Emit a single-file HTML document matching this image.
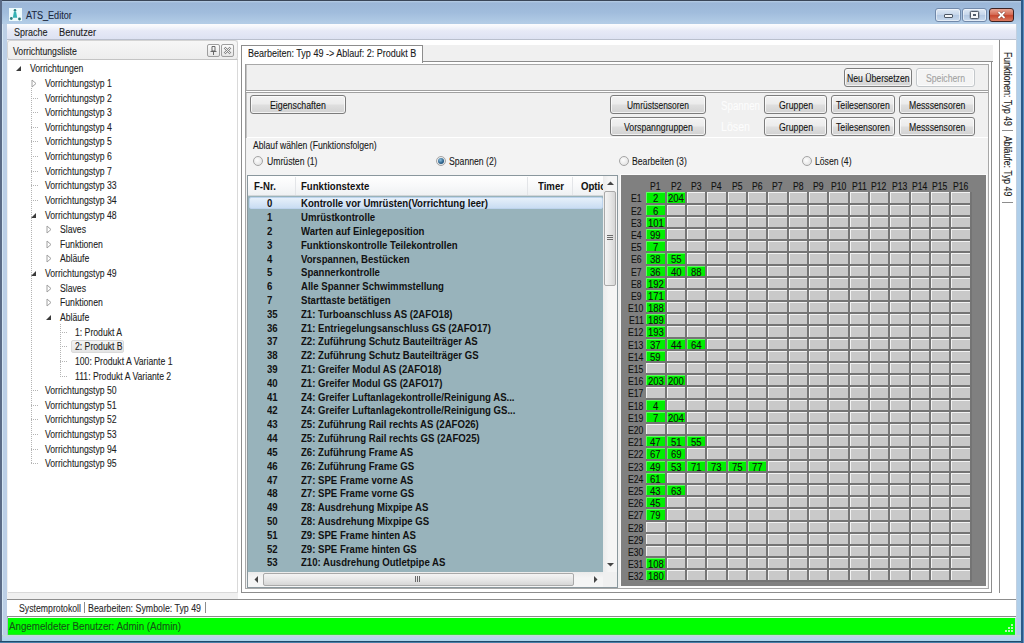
<!DOCTYPE html>
<html><head><meta charset="utf-8"><title>ATS_Editor</title><style>
*{margin:0;padding:0;box-sizing:border-box}
html,body{width:1024px;height:643px;overflow:hidden}
body{position:relative;font-family:"Liberation Sans",sans-serif;font-size:10px;color:#000;background:#bcd1ea}
.a{position:absolute}
.t{position:absolute;white-space:nowrap;line-height:1;-webkit-text-stroke:0.1px currentColor}
.btn{border-radius:3px;box-shadow:inset 0 0 0 1px rgba(255,255,255,.7)}
</style></head><body>

<div class="a" style="left:0px;top:0px;width:1024px;height:643px;background:#c3d3ec;"></div>
<div class="a" style="left:0px;top:0px;width:1024px;height:24px;background:linear-gradient(#c6daec 0px,#9cb7d8 3px,#a0bcdc 12px,#b2cce6 23px);"></div>
<div class="a" style="left:0px;top:0px;width:1024px;height:1px;background:#3a4658;"></div>
<div class="a" style="left:0px;top:0px;width:2px;height:643px;background:#5b6b86;"></div>
<div class="a" style="left:2px;top:24px;width:1px;height:611px;background:#d4e6f4;"></div>
<div class="a" style="left:3px;top:24px;width:4px;height:611px;background:#bccfe6;"></div>
<div class="a" style="left:7px;top:40px;width:1px;height:595px;background:#aab6c9;"></div>
<div class="a" style="left:1016px;top:24px;width:1px;height:611px;background:#c2d0e0;"></div>
<div class="a" style="left:1017px;top:24px;width:4px;height:611px;background:#b0cfea;"></div>
<div class="a" style="left:1021px;top:0px;width:2px;height:643px;background:#2b5b88;"></div>
<div class="a" style="left:1023px;top:0px;width:1px;height:643px;background:#5a8fc0;"></div>
<div class="a" style="left:2px;top:635px;width:1019px;height:6px;background:linear-gradient(#b8e8c8 0px,#c0d0e8 1.5px,#b8d4ec 3px,#a8d4ec 6px);"></div>
<div class="a" style="left:0px;top:641px;width:1021px;height:1px;background:#1f4b6b;"></div>
<div class="a" style="left:0px;top:642px;width:1021px;height:1px;background:#4a80a8;"></div>
<svg class="a" style="left:9px;top:8px" width="13" height="13" viewBox="0 0 13 13">
<rect width="13" height="13" fill="#eefbfc"/>
<circle cx="6" cy="2.2" r="1.3" fill="#2a7f80"/>
<path d="M5 3.5 L7 3.5 L8.2 9.8 L3.8 9.8 Z" fill="#33b2b4"/>
<circle cx="2.3" cy="10.5" r="1.4" fill="#2b7e7f"/>
<circle cx="10.5" cy="11" r="1.4" fill="#2a6f70"/>
</svg>
<div class="t" style="left:25.50px;top:11px;font-size:10px;color:#1a2840;transform:scaleX(0.9089);transform-origin:0 0;">ATS_Editor</div>
<div class="a" style="left:935px;top:8px;width:26px;height:14px;border:1px solid #7189aa;border-radius:3px;background:linear-gradient(#dfe9f5,#c4d5ea 50%,#b3c8e2 51%,#c9daee);box-shadow:inset 0 0 0 1px rgba(255,255,255,.5)"></div>
<div class="a" style="left:944px;top:14px;width:9px;height:4px;border:1px solid #4d5866;background:#f4f6f9;border-radius:1px"></div>
<div class="a" style="left:962px;top:8px;width:25px;height:14px;border:1px solid #7189aa;border-radius:3px;background:linear-gradient(#dfe9f5,#c4d5ea 50%,#b3c8e2 51%,#c9daee);box-shadow:inset 0 0 0 1px rgba(255,255,255,.5)"></div>
<div class="a" style="left:970px;top:11px;width:9px;height:8px;border:1px solid #505b6a;background:#f4f6f9;border-radius:1.5px;box-shadow:0 0 0 0.5px rgba(80,90,105,.5)"></div><div class="a" style="left:973px;top:14px;width:3px;height:2px;background:#505b6a"></div>
<div class="a" style="left:989px;top:8px;width:25px;height:14px;border:1px solid #3c2222;border-radius:3px;background:linear-gradient(#e8a593,#d66e58 45%,#c7472f 55%,#db7a60);"></div>
<svg class="a" style="left:996px;top:10px" width="11" height="10" viewBox="0 0 11 10"><path d="M2.5 2 L8.5 8 M8.5 2 L2.5 8" stroke="#7a3a30" stroke-width="3"/><path d="M2.5 2 L8.5 8 M8.5 2 L2.5 8" stroke="#fff" stroke-width="1.8"/></svg>

<div class="a" style="left:7px;top:24px;width:1009px;height:16px;background:linear-gradient(#fbfcfe 0px,#f4f6fb 3px,#e6e9f6 7px,#dde2f2 15px);border-bottom:1px solid #b9bfcd;"></div>
<div class="t" style="left:13.50px;top:28px;font-size:10px;color:#1e1e1e;transform:scaleX(0.8993);transform-origin:0 0;">Sprache</div>
<div class="t" style="left:58.70px;top:28px;font-size:10px;color:#1e1e1e;transform:scaleX(0.9245);transform-origin:0 0;">Benutzer</div>
<div class="a" style="left:7px;top:40px;width:1009px;height:560px;background:#f0f0f0;"></div>
<div class="a" style="left:7px;top:40px;width:231px;height:20px;background:linear-gradient(#f6f6f6,#ededed);border:1px solid #d4d4d4;border-radius:3px;"></div>
<div class="t" style="left:12.50px;top:47px;font-size:10px;color:#1e1e1e;transform:scaleX(0.8689);transform-origin:0 0;">Vorrichtungsliste</div>
<div class="a" style="left:207px;top:44px;width:13px;height:13px;border:1px solid #9e9e9e;border-radius:2px;background:linear-gradient(#fbfbfb,#e6e6e6)"></div>
<svg class="a" style="left:207px;top:44px" width="13" height="13" viewBox="0 0 13 13"><path d="M5 2.5h3v4.5h-3z M3.5 7.5h6 M6.5 7.5v3.5" stroke="#5a5a5a" fill="none" stroke-width="0.9"/></svg>
<div class="a" style="left:221px;top:44px;width:13px;height:13px;border:1px solid #9e9e9e;border-radius:2px;background:linear-gradient(#fbfbfb,#e6e6e6)"></div>
<svg class="a" style="left:221px;top:44px" width="13" height="13" viewBox="0 0 13 13"><path d="M3.5 3.5l6 6 M9.5 3.5l-6 6" stroke="#858585" stroke-width="2.4" fill="none"/><path d="M3.5 3.5l6 6 M9.5 3.5l-6 6" stroke="#f2f2f2" stroke-width="1" fill="none"/></svg>

<div class="a" style="left:8px;top:59px;width:230px;height:534px;background:#fff;border:1px solid #d9d9d9;border-top:1px solid #c4c4c4;border-left:none;"></div>
<div class="a" style="left:71px;top:340px;width:53px;height:13px;background:linear-gradient(#f4f4f4,#e4e4e4);border:1px solid #dadada;border-radius:2px"></div>
<div class="t" style="left:30.30px;top:64px;font-size:10px;color:#1e1e1e;transform:scaleX(0.8650);transform-origin:0 0;">Vorrichtungen</div>
<svg class="a" style="left:14.8px;top:65px" width="7" height="7" viewBox="0 0 7 7"><path d="M6 1 L6 6 L1 6 Z" fill="#3a3a3a"/></svg>
<div class="t" style="left:44.60px;top:79px;font-size:10px;color:#1e1e1e;transform:scaleX(0.8650);transform-origin:0 0;">Vorrichtungstyp 1</div>
<svg class="a" style="left:30.5px;top:79px" width="6" height="9" viewBox="0 0 6 9"><path d="M1 1 L5 4.5 L1 8 Z" fill="#fff" stroke="#a0a0a0" stroke-width="1"/></svg>
<div class="t" style="left:44.60px;top:94px;font-size:10px;color:#1e1e1e;transform:scaleX(0.8650);transform-origin:0 0;">Vorrichtungstyp 2</div>
<div class="t" style="left:44.60px;top:108px;font-size:10px;color:#1e1e1e;transform:scaleX(0.8650);transform-origin:0 0;">Vorrichtungstyp 3</div>
<div class="t" style="left:44.60px;top:123px;font-size:10px;color:#1e1e1e;transform:scaleX(0.8650);transform-origin:0 0;">Vorrichtungstyp 4</div>
<div class="t" style="left:44.60px;top:137px;font-size:10px;color:#1e1e1e;transform:scaleX(0.8650);transform-origin:0 0;">Vorrichtungstyp 5</div>
<div class="t" style="left:44.60px;top:152px;font-size:10px;color:#1e1e1e;transform:scaleX(0.8650);transform-origin:0 0;">Vorrichtungstyp 6</div>
<div class="t" style="left:44.60px;top:167px;font-size:10px;color:#1e1e1e;transform:scaleX(0.8650);transform-origin:0 0;">Vorrichtungstyp 7</div>
<div class="t" style="left:44.60px;top:181px;font-size:10px;color:#1e1e1e;transform:scaleX(0.8650);transform-origin:0 0;">Vorrichtungstyp 33</div>
<div class="t" style="left:44.60px;top:196px;font-size:10px;color:#1e1e1e;transform:scaleX(0.8650);transform-origin:0 0;">Vorrichtungstyp 34</div>
<div class="t" style="left:44.60px;top:211px;font-size:10px;color:#1e1e1e;transform:scaleX(0.8650);transform-origin:0 0;">Vorrichtungstyp 48</div>
<svg class="a" style="left:29.5px;top:212px" width="7" height="7" viewBox="0 0 7 7"><path d="M6 1 L6 6 L1 6 Z" fill="#3a3a3a"/></svg>
<div class="t" style="left:59.80px;top:225px;font-size:10px;color:#1e1e1e;transform:scaleX(0.8650);transform-origin:0 0;">Slaves</div>
<svg class="a" style="left:45.7px;top:225px" width="6" height="9" viewBox="0 0 6 9"><path d="M1 1 L5 4.5 L1 8 Z" fill="#fff" stroke="#a0a0a0" stroke-width="1"/></svg>
<div class="t" style="left:59.80px;top:240px;font-size:10px;color:#1e1e1e;transform:scaleX(0.8650);transform-origin:0 0;">Funktionen</div>
<svg class="a" style="left:45.7px;top:240px" width="6" height="9" viewBox="0 0 6 9"><path d="M1 1 L5 4.5 L1 8 Z" fill="#fff" stroke="#a0a0a0" stroke-width="1"/></svg>
<div class="t" style="left:59.80px;top:254px;font-size:10px;color:#1e1e1e;transform:scaleX(0.8650);transform-origin:0 0;">Abläufe</div>
<svg class="a" style="left:45.7px;top:254px" width="6" height="9" viewBox="0 0 6 9"><path d="M1 1 L5 4.5 L1 8 Z" fill="#fff" stroke="#a0a0a0" stroke-width="1"/></svg>
<div class="t" style="left:44.60px;top:269px;font-size:10px;color:#1e1e1e;transform:scaleX(0.8650);transform-origin:0 0;">Vorrichtungstyp 49</div>
<svg class="a" style="left:29.5px;top:270px" width="7" height="7" viewBox="0 0 7 7"><path d="M6 1 L6 6 L1 6 Z" fill="#3a3a3a"/></svg>
<div class="t" style="left:59.80px;top:284px;font-size:10px;color:#1e1e1e;transform:scaleX(0.8650);transform-origin:0 0;">Slaves</div>
<svg class="a" style="left:45.7px;top:284px" width="6" height="9" viewBox="0 0 6 9"><path d="M1 1 L5 4.5 L1 8 Z" fill="#fff" stroke="#a0a0a0" stroke-width="1"/></svg>
<div class="t" style="left:59.80px;top:298px;font-size:10px;color:#1e1e1e;transform:scaleX(0.8650);transform-origin:0 0;">Funktionen</div>
<svg class="a" style="left:45.7px;top:298px" width="6" height="9" viewBox="0 0 6 9"><path d="M1 1 L5 4.5 L1 8 Z" fill="#fff" stroke="#a0a0a0" stroke-width="1"/></svg>
<div class="t" style="left:59.80px;top:313px;font-size:10px;color:#1e1e1e;transform:scaleX(0.8650);transform-origin:0 0;">Abläufe</div>
<svg class="a" style="left:44.7px;top:314px" width="7" height="7" viewBox="0 0 7 7"><path d="M6 1 L6 6 L1 6 Z" fill="#3a3a3a"/></svg>
<div class="t" style="left:74.90px;top:328px;font-size:10px;color:#1e1e1e;transform:scaleX(0.8650);transform-origin:0 0;">1: Produkt A</div>
<div class="t" style="left:74.90px;top:342px;font-size:10px;color:#1e1e1e;transform:scaleX(0.8650);transform-origin:0 0;">2: Produkt B</div>
<div class="t" style="left:74.90px;top:357px;font-size:10px;color:#1e1e1e;transform:scaleX(0.8650);transform-origin:0 0;">100: Produkt A Variante 1</div>
<div class="t" style="left:74.90px;top:372px;font-size:10px;color:#1e1e1e;transform:scaleX(0.8650);transform-origin:0 0;">111: Produkt A Variante 2</div>
<div class="t" style="left:44.60px;top:386px;font-size:10px;color:#1e1e1e;transform:scaleX(0.8650);transform-origin:0 0;">Vorrichtungstyp 50</div>
<div class="t" style="left:44.60px;top:401px;font-size:10px;color:#1e1e1e;transform:scaleX(0.8650);transform-origin:0 0;">Vorrichtungstyp 51</div>
<div class="t" style="left:44.60px;top:415px;font-size:10px;color:#1e1e1e;transform:scaleX(0.8650);transform-origin:0 0;">Vorrichtungstyp 52</div>
<div class="t" style="left:44.60px;top:430px;font-size:10px;color:#1e1e1e;transform:scaleX(0.8650);transform-origin:0 0;">Vorrichtungstyp 53</div>
<div class="t" style="left:44.60px;top:445px;font-size:10px;color:#1e1e1e;transform:scaleX(0.8650);transform-origin:0 0;">Vorrichtungstyp 94</div>
<div class="t" style="left:44.60px;top:459px;font-size:10px;color:#1e1e1e;transform:scaleX(0.8650);transform-origin:0 0;">Vorrichtungstyp 95</div>
<div class="a" style="left:31px;top:98px;width:8px;height:1px;background:repeating-linear-gradient(90deg,#b4b4b4 0 1px,transparent 1px 2px)"></div>
<div class="a" style="left:31px;top:112px;width:8px;height:1px;background:repeating-linear-gradient(90deg,#b4b4b4 0 1px,transparent 1px 2px)"></div>
<div class="a" style="left:31px;top:127px;width:8px;height:1px;background:repeating-linear-gradient(90deg,#b4b4b4 0 1px,transparent 1px 2px)"></div>
<div class="a" style="left:31px;top:141px;width:8px;height:1px;background:repeating-linear-gradient(90deg,#b4b4b4 0 1px,transparent 1px 2px)"></div>
<div class="a" style="left:31px;top:156px;width:8px;height:1px;background:repeating-linear-gradient(90deg,#b4b4b4 0 1px,transparent 1px 2px)"></div>
<div class="a" style="left:31px;top:171px;width:8px;height:1px;background:repeating-linear-gradient(90deg,#b4b4b4 0 1px,transparent 1px 2px)"></div>
<div class="a" style="left:31px;top:185px;width:8px;height:1px;background:repeating-linear-gradient(90deg,#b4b4b4 0 1px,transparent 1px 2px)"></div>
<div class="a" style="left:31px;top:200px;width:8px;height:1px;background:repeating-linear-gradient(90deg,#b4b4b4 0 1px,transparent 1px 2px)"></div>
<div class="a" style="left:60px;top:332px;width:8px;height:1px;background:repeating-linear-gradient(90deg,#b4b4b4 0 1px,transparent 1px 2px)"></div>
<div class="a" style="left:60px;top:346px;width:8px;height:1px;background:repeating-linear-gradient(90deg,#b4b4b4 0 1px,transparent 1px 2px)"></div>
<div class="a" style="left:60px;top:361px;width:8px;height:1px;background:repeating-linear-gradient(90deg,#b4b4b4 0 1px,transparent 1px 2px)"></div>
<div class="a" style="left:60px;top:376px;width:8px;height:1px;background:repeating-linear-gradient(90deg,#b4b4b4 0 1px,transparent 1px 2px)"></div>
<div class="a" style="left:31px;top:390px;width:8px;height:1px;background:repeating-linear-gradient(90deg,#b4b4b4 0 1px,transparent 1px 2px)"></div>
<div class="a" style="left:31px;top:405px;width:8px;height:1px;background:repeating-linear-gradient(90deg,#b4b4b4 0 1px,transparent 1px 2px)"></div>
<div class="a" style="left:31px;top:419px;width:8px;height:1px;background:repeating-linear-gradient(90deg,#b4b4b4 0 1px,transparent 1px 2px)"></div>
<div class="a" style="left:31px;top:434px;width:8px;height:1px;background:repeating-linear-gradient(90deg,#b4b4b4 0 1px,transparent 1px 2px)"></div>
<div class="a" style="left:31px;top:449px;width:8px;height:1px;background:repeating-linear-gradient(90deg,#b4b4b4 0 1px,transparent 1px 2px)"></div>
<div class="a" style="left:31px;top:463px;width:8px;height:1px;background:repeating-linear-gradient(90deg,#b4b4b4 0 1px,transparent 1px 2px)"></div>
<div class="a" style="left:31px;top:88px;width:1px;height:376px;background:repeating-linear-gradient(#b4b4b4 0 1px,transparent 1px 2px)"></div>
<div class="a" style="left:60px;top:324px;width:1px;height:53px;background:repeating-linear-gradient(#b4b4b4 0 1px,transparent 1px 2px)"></div>
<div class="a" style="left:238px;top:40px;width:761px;height:560px;background:#fff;"></div>
<div class="a" style="left:242px;top:45px;width:751px;height:17px;background:#f0f0f0;border-bottom:1px solid #8d8d8d;"></div>
<div class="a" style="left:241px;top:45px;width:182px;height:18px;background:#fff;border:1px solid #8d8d8d;border-bottom:none;"></div>
<div class="t" style="left:247.80px;top:49px;font-size:10px;color:#1a1a1a;transform:scaleX(0.9000);transform-origin:0 0;">Bearbeiten: Typ 49 -&gt; Ablauf: 2: Produkt B</div>
<div class="a" style="left:241px;top:62px;width:751px;height:531px;border:1px solid #8d8d8d;border-top:none;"></div>
<div class="a" style="left:245px;top:64px;width:744px;height:525px;background:#f0f0f0;border:1px solid #a8a8a8;"></div>
<div class="a" style="left:245px;top:64px;width:1px;height:74px;background:#9a9a9a;"></div>
<div class="a" style="left:246px;top:65px;width:1px;height:73px;background:#c4c4c4;"></div>
<div class="a" style="left:246px;top:90px;width:742px;height:1px;background:#a0a0a0;"></div>
<div class="a" style="left:246px;top:91px;width:742px;height:1px;background:#fff;"></div>
<div class="a" style="left:246px;top:92px;width:742px;height:1px;background:#a0a0a0;"></div>
<div class="a btn" style="left:844px;top:68px;width:68px;height:19px;background:linear-gradient(#f3f3f3 0%,#ececec 45%,#dedede 55%,#d2d2d2 100%);border:1px solid #7c7c7c;"></div>
<div class="t" style="left:846.75px;top:74px;font-size:10px;color:#151515;transform:scaleX(0.8649);transform-origin:0 0;">Neu Übersetzen</div>
<div class="a btn" style="left:916px;top:68px;width:59px;height:19px;background:#f4f4f4;border:1px solid #c4c8cb;"></div>
<div class="t" style="left:926.00px;top:74px;font-size:10px;color:#a3a3a3;transform:scaleX(0.8661);transform-origin:0 0;">Speichern</div>
<div class="a btn" style="left:250px;top:95px;width:96px;height:19px;background:linear-gradient(#f3f3f3 0%,#ececec 45%,#dedede 55%,#d2d2d2 100%);border:1px solid #7c7c7c;"></div>
<div class="t" style="left:270.10px;top:101px;font-size:10px;color:#151515;transform:scaleX(0.8804);transform-origin:0 0;">Eigenschaften</div>
<div class="a btn" style="left:610px;top:95px;width:96px;height:19px;background:linear-gradient(#f3f3f3 0%,#ececec 45%,#dedede 55%,#d2d2d2 100%);border:1px solid #7c7c7c;"></div>
<div class="t" style="left:627.00px;top:101px;font-size:10px;color:#151515;transform:scaleX(0.8451);transform-origin:0 0;">Umrüstsensoren</div>
<div class="a btn" style="left:610px;top:117px;width:96px;height:19px;background:linear-gradient(#f3f3f3 0%,#ececec 45%,#dedede 55%,#d2d2d2 100%);border:1px solid #7c7c7c;"></div>
<div class="t" style="left:623.62px;top:123px;font-size:10px;color:#151515;transform:scaleX(0.8707);transform-origin:0 0;">Vorspanngruppen</div>
<div class="t" style="left:720.50px;top:100px;font-size:12.5px;color:#fdfdfd;transform:scaleX(0.7792);transform-origin:0 0;">Spannen</div>
<div class="t" style="left:720.50px;top:121px;font-size:12.5px;color:#fdfdfd;transform:scaleX(0.8514);transform-origin:0 0;">Lösen</div>
<div class="a btn" style="left:764px;top:95px;width:63px;height:19px;background:linear-gradient(#f3f3f3 0%,#ececec 45%,#dedede 55%,#d2d2d2 100%);border:1px solid #7c7c7c;"></div>
<div class="t" style="left:778.50px;top:101px;font-size:10px;color:#151515;transform:scaleX(0.8736);transform-origin:0 0;">Gruppen</div>
<div class="a btn" style="left:764px;top:117px;width:63px;height:19px;background:linear-gradient(#f3f3f3 0%,#ececec 45%,#dedede 55%,#d2d2d2 100%);border:1px solid #7c7c7c;"></div>
<div class="t" style="left:778.50px;top:123px;font-size:10px;color:#151515;transform:scaleX(0.8736);transform-origin:0 0;">Gruppen</div>
<div class="a btn" style="left:831px;top:95px;width:64px;height:19px;background:linear-gradient(#f3f3f3 0%,#ececec 45%,#dedede 55%,#d2d2d2 100%);border:1px solid #7c7c7c;"></div>
<div class="t" style="left:836.12px;top:101px;font-size:10px;color:#151515;transform:scaleX(0.8712);transform-origin:0 0;">Teilesensoren</div>
<div class="a btn" style="left:831px;top:117px;width:64px;height:19px;background:linear-gradient(#f3f3f3 0%,#ececec 45%,#dedede 55%,#d2d2d2 100%);border:1px solid #7c7c7c;"></div>
<div class="t" style="left:836.12px;top:123px;font-size:10px;color:#151515;transform:scaleX(0.8712);transform-origin:0 0;">Teilesensoren</div>
<div class="a btn" style="left:899px;top:95px;width:76px;height:19px;background:linear-gradient(#f3f3f3 0%,#ececec 45%,#dedede 55%,#d2d2d2 100%);border:1px solid #7c7c7c;"></div>
<div class="t" style="left:908.88px;top:101px;font-size:10px;color:#151515;transform:scaleX(0.8650);transform-origin:0 0;">Messsensoren</div>
<div class="a btn" style="left:899px;top:117px;width:76px;height:19px;background:linear-gradient(#f3f3f3 0%,#ececec 45%,#dedede 55%,#d2d2d2 100%);border:1px solid #7c7c7c;"></div>
<div class="t" style="left:908.88px;top:123px;font-size:10px;color:#151515;transform:scaleX(0.8650);transform-origin:0 0;">Messsensoren</div>
<div class="a" style="left:247px;top:137px;width:741px;height:38px;background:#f3f3f3;border-top:1px solid #fff;"></div>
<div class="t" style="left:252.80px;top:141px;font-size:10px;color:#1a1a1a;transform:scaleX(0.8652);transform-origin:0 0;">Ablauf wählen (Funktionsfolgen)</div>
<div class="a" style="left:253px;top:156px;width:10px;height:10px;border-radius:50%;border:1px solid #a4a4a4;background:radial-gradient(circle at 40% 40%,#fdfdfd,#dcdcdc)"></div>
<div class="t" style="left:266.80px;top:157px;font-size:10px;color:#1a1a1a;transform:scaleX(0.8650);transform-origin:0 0;">Umrüsten (1)</div>
<div class="a" style="left:436px;top:156px;width:10px;height:10px;border-radius:50%;border:1px solid #a4a4a4;background:radial-gradient(circle at 40% 40%,#fdfdfd,#dcdcdc)"></div>
<div class="a" style="left:438px;top:158px;width:6px;height:6px;border-radius:50%;background:radial-gradient(circle at 40% 35%,#8cc0e0,#2a5f88 60%,#1d4a70)"></div>
<div class="t" style="left:449.00px;top:157px;font-size:10px;color:#1a1a1a;transform:scaleX(0.8650);transform-origin:0 0;">Spannen (2)</div>
<div class="a" style="left:619px;top:156px;width:10px;height:10px;border-radius:50%;border:1px solid #a4a4a4;background:radial-gradient(circle at 40% 40%,#fdfdfd,#dcdcdc)"></div>
<div class="t" style="left:632.00px;top:157px;font-size:10px;color:#1a1a1a;transform:scaleX(0.8650);transform-origin:0 0;">Bearbeiten (3)</div>
<div class="a" style="left:802px;top:156px;width:10px;height:10px;border-radius:50%;border:1px solid #a4a4a4;background:radial-gradient(circle at 40% 40%,#fdfdfd,#dcdcdc)"></div>
<div class="t" style="left:814.80px;top:157px;font-size:10px;color:#1a1a1a;transform:scaleX(0.8650);transform-origin:0 0;">Lösen (4)</div>
<div class="a" style="left:247px;top:175px;width:371px;height:413px;background:#98b3bb;border:1px solid #8a979d;"></div>
<div class="a" style="left:248px;top:176px;width:355px;height:20px;background:linear-gradient(#ffffff,#f8f9fa 50%,#eff1f3);border-bottom:1px solid #d3d6d9;"></div>
<div class="a" style="left:295px;top:177px;width:1px;height:18px;background:#e3e5e8;"></div>
<div class="a" style="left:527px;top:177px;width:1px;height:18px;background:#e3e5e8;"></div>
<div class="a" style="left:572px;top:177px;width:1px;height:18px;background:#e3e5e8;"></div>
<div class="t" style="left:254.20px;top:182px;font-size:10px;color:#111;transform:scaleX(0.9600);transform-origin:0 0;font-weight:bold;-webkit-text-stroke:0;">F-Nr.</div>
<div class="t" style="left:300.70px;top:182px;font-size:10px;color:#111;transform:scaleX(0.9600);transform-origin:0 0;font-weight:bold;-webkit-text-stroke:0;">Funktionstexte</div>
<div class="t" style="left:537.70px;top:182px;font-size:10px;color:#111;transform:scaleX(0.9600);transform-origin:0 0;font-weight:bold;-webkit-text-stroke:0;">Timer</div>
<div class="a" style="left:581px;top:176px;width:22px;height:19px;overflow:hidden"><div class="t" style="left:0;top:6px;font-size:10px;font-weight:bold;color:#111;transform:scaleX(0.96);transform-origin:0 0">Optionen</div></div>
<div class="a" style="left:249px;top:197px;width:354px;height:12px;background:linear-gradient(#e6f0fa,#c9ddf2);border:1px solid #bcd3ec;border-radius:2px"></div>
<div class="t" style="left:267.20px;top:199px;font-size:10px;color:#111;transform:scaleX(0.9600);transform-origin:0 0;font-weight:bold;-webkit-text-stroke:0;">0</div>
<div class="t" style="left:300.80px;top:199px;font-size:10px;color:#111;transform:scaleX(0.9600);transform-origin:0 0;font-weight:bold;-webkit-text-stroke:0;">Kontrolle vor Umrüsten(Vorrichtung leer)</div>
<div class="t" style="left:267.20px;top:213px;font-size:10px;color:#111;transform:scaleX(0.9600);transform-origin:0 0;font-weight:bold;-webkit-text-stroke:0;">1</div>
<div class="t" style="left:300.80px;top:213px;font-size:10px;color:#111;transform:scaleX(0.9600);transform-origin:0 0;font-weight:bold;-webkit-text-stroke:0;">Umrüstkontrolle</div>
<div class="t" style="left:267.20px;top:227px;font-size:10px;color:#111;transform:scaleX(0.9600);transform-origin:0 0;font-weight:bold;-webkit-text-stroke:0;">2</div>
<div class="t" style="left:300.80px;top:227px;font-size:10px;color:#111;transform:scaleX(0.9600);transform-origin:0 0;font-weight:bold;-webkit-text-stroke:0;">Warten auf Einlegeposition</div>
<div class="t" style="left:267.20px;top:241px;font-size:10px;color:#111;transform:scaleX(0.9600);transform-origin:0 0;font-weight:bold;-webkit-text-stroke:0;">3</div>
<div class="t" style="left:300.80px;top:241px;font-size:10px;color:#111;transform:scaleX(0.9600);transform-origin:0 0;font-weight:bold;-webkit-text-stroke:0;">Funktionskontrolle Teilekontrollen</div>
<div class="t" style="left:267.20px;top:255px;font-size:10px;color:#111;transform:scaleX(0.9600);transform-origin:0 0;font-weight:bold;-webkit-text-stroke:0;">4</div>
<div class="t" style="left:300.80px;top:255px;font-size:10px;color:#111;transform:scaleX(0.9600);transform-origin:0 0;font-weight:bold;-webkit-text-stroke:0;">Vorspannen, Bestücken</div>
<div class="t" style="left:267.20px;top:268px;font-size:10px;color:#111;transform:scaleX(0.9600);transform-origin:0 0;font-weight:bold;-webkit-text-stroke:0;">5</div>
<div class="t" style="left:300.80px;top:268px;font-size:10px;color:#111;transform:scaleX(0.9600);transform-origin:0 0;font-weight:bold;-webkit-text-stroke:0;">Spannerkontrolle</div>
<div class="t" style="left:267.20px;top:282px;font-size:10px;color:#111;transform:scaleX(0.9600);transform-origin:0 0;font-weight:bold;-webkit-text-stroke:0;">6</div>
<div class="t" style="left:300.80px;top:282px;font-size:10px;color:#111;transform:scaleX(0.9600);transform-origin:0 0;font-weight:bold;-webkit-text-stroke:0;">Alle Spanner Schwimmstellung</div>
<div class="t" style="left:267.20px;top:296px;font-size:10px;color:#111;transform:scaleX(0.9600);transform-origin:0 0;font-weight:bold;-webkit-text-stroke:0;">7</div>
<div class="t" style="left:300.80px;top:296px;font-size:10px;color:#111;transform:scaleX(0.9600);transform-origin:0 0;font-weight:bold;-webkit-text-stroke:0;">Starttaste betätigen</div>
<div class="t" style="left:267.20px;top:310px;font-size:10px;color:#111;transform:scaleX(0.9600);transform-origin:0 0;font-weight:bold;-webkit-text-stroke:0;">35</div>
<div class="t" style="left:300.80px;top:310px;font-size:10px;color:#111;transform:scaleX(0.9600);transform-origin:0 0;font-weight:bold;-webkit-text-stroke:0;">Z1: Turboanschluss AS (2AFO18)</div>
<div class="t" style="left:267.20px;top:324px;font-size:10px;color:#111;transform:scaleX(0.9600);transform-origin:0 0;font-weight:bold;-webkit-text-stroke:0;">36</div>
<div class="t" style="left:300.80px;top:324px;font-size:10px;color:#111;transform:scaleX(0.9600);transform-origin:0 0;font-weight:bold;-webkit-text-stroke:0;">Z1: Entriegelungsanschluss GS (2AFO17)</div>
<div class="t" style="left:267.20px;top:337px;font-size:10px;color:#111;transform:scaleX(0.9600);transform-origin:0 0;font-weight:bold;-webkit-text-stroke:0;">37</div>
<div class="t" style="left:300.80px;top:337px;font-size:10px;color:#111;transform:scaleX(0.9600);transform-origin:0 0;font-weight:bold;-webkit-text-stroke:0;">Z2: Zuführung Schutz Bauteilträger AS</div>
<div class="t" style="left:267.20px;top:351px;font-size:10px;color:#111;transform:scaleX(0.9600);transform-origin:0 0;font-weight:bold;-webkit-text-stroke:0;">38</div>
<div class="t" style="left:300.80px;top:351px;font-size:10px;color:#111;transform:scaleX(0.9600);transform-origin:0 0;font-weight:bold;-webkit-text-stroke:0;">Z2: Zuführung Schutz Bauteilträger GS</div>
<div class="t" style="left:267.20px;top:365px;font-size:10px;color:#111;transform:scaleX(0.9600);transform-origin:0 0;font-weight:bold;-webkit-text-stroke:0;">39</div>
<div class="t" style="left:300.80px;top:365px;font-size:10px;color:#111;transform:scaleX(0.9600);transform-origin:0 0;font-weight:bold;-webkit-text-stroke:0;">Z1: Greifer Modul AS (2AFO18)</div>
<div class="t" style="left:267.20px;top:379px;font-size:10px;color:#111;transform:scaleX(0.9600);transform-origin:0 0;font-weight:bold;-webkit-text-stroke:0;">40</div>
<div class="t" style="left:300.80px;top:379px;font-size:10px;color:#111;transform:scaleX(0.9600);transform-origin:0 0;font-weight:bold;-webkit-text-stroke:0;">Z1: Greifer Modul GS (2AFO17)</div>
<div class="t" style="left:267.20px;top:393px;font-size:10px;color:#111;transform:scaleX(0.9600);transform-origin:0 0;font-weight:bold;-webkit-text-stroke:0;">41</div>
<div class="t" style="left:300.80px;top:393px;font-size:10px;color:#111;transform:scaleX(0.9600);transform-origin:0 0;font-weight:bold;-webkit-text-stroke:0;">Z4: Greifer Luftanlagekontrolle/Reinigung AS...</div>
<div class="t" style="left:267.20px;top:406px;font-size:10px;color:#111;transform:scaleX(0.9600);transform-origin:0 0;font-weight:bold;-webkit-text-stroke:0;">42</div>
<div class="t" style="left:300.80px;top:406px;font-size:10px;color:#111;transform:scaleX(0.9600);transform-origin:0 0;font-weight:bold;-webkit-text-stroke:0;">Z4: Greifer Luftanlagekontrolle/Reinigung GS...</div>
<div class="t" style="left:267.20px;top:420px;font-size:10px;color:#111;transform:scaleX(0.9600);transform-origin:0 0;font-weight:bold;-webkit-text-stroke:0;">43</div>
<div class="t" style="left:300.80px;top:420px;font-size:10px;color:#111;transform:scaleX(0.9600);transform-origin:0 0;font-weight:bold;-webkit-text-stroke:0;">Z5: Zuführung Rail rechts AS (2AFO26)</div>
<div class="t" style="left:267.20px;top:434px;font-size:10px;color:#111;transform:scaleX(0.9600);transform-origin:0 0;font-weight:bold;-webkit-text-stroke:0;">44</div>
<div class="t" style="left:300.80px;top:434px;font-size:10px;color:#111;transform:scaleX(0.9600);transform-origin:0 0;font-weight:bold;-webkit-text-stroke:0;">Z5: Zuführung Rail rechts GS (2AFO25)</div>
<div class="t" style="left:267.20px;top:448px;font-size:10px;color:#111;transform:scaleX(0.9600);transform-origin:0 0;font-weight:bold;-webkit-text-stroke:0;">45</div>
<div class="t" style="left:300.80px;top:448px;font-size:10px;color:#111;transform:scaleX(0.9600);transform-origin:0 0;font-weight:bold;-webkit-text-stroke:0;">Z6: Zuführung Frame AS</div>
<div class="t" style="left:267.20px;top:462px;font-size:10px;color:#111;transform:scaleX(0.9600);transform-origin:0 0;font-weight:bold;-webkit-text-stroke:0;">46</div>
<div class="t" style="left:300.80px;top:462px;font-size:10px;color:#111;transform:scaleX(0.9600);transform-origin:0 0;font-weight:bold;-webkit-text-stroke:0;">Z6: Zuführung Frame GS</div>
<div class="t" style="left:267.20px;top:476px;font-size:10px;color:#111;transform:scaleX(0.9600);transform-origin:0 0;font-weight:bold;-webkit-text-stroke:0;">47</div>
<div class="t" style="left:300.80px;top:476px;font-size:10px;color:#111;transform:scaleX(0.9600);transform-origin:0 0;font-weight:bold;-webkit-text-stroke:0;">Z7: SPE Frame vorne AS</div>
<div class="t" style="left:267.20px;top:489px;font-size:10px;color:#111;transform:scaleX(0.9600);transform-origin:0 0;font-weight:bold;-webkit-text-stroke:0;">48</div>
<div class="t" style="left:300.80px;top:489px;font-size:10px;color:#111;transform:scaleX(0.9600);transform-origin:0 0;font-weight:bold;-webkit-text-stroke:0;">Z7: SPE Frame vorne GS</div>
<div class="t" style="left:267.20px;top:503px;font-size:10px;color:#111;transform:scaleX(0.9600);transform-origin:0 0;font-weight:bold;-webkit-text-stroke:0;">49</div>
<div class="t" style="left:300.80px;top:503px;font-size:10px;color:#111;transform:scaleX(0.9600);transform-origin:0 0;font-weight:bold;-webkit-text-stroke:0;">Z8: Ausdrehung Mixpipe AS</div>
<div class="t" style="left:267.20px;top:517px;font-size:10px;color:#111;transform:scaleX(0.9600);transform-origin:0 0;font-weight:bold;-webkit-text-stroke:0;">50</div>
<div class="t" style="left:300.80px;top:517px;font-size:10px;color:#111;transform:scaleX(0.9600);transform-origin:0 0;font-weight:bold;-webkit-text-stroke:0;">Z8: Ausdrehung Mixpipe GS</div>
<div class="t" style="left:267.20px;top:531px;font-size:10px;color:#111;transform:scaleX(0.9600);transform-origin:0 0;font-weight:bold;-webkit-text-stroke:0;">51</div>
<div class="t" style="left:300.80px;top:531px;font-size:10px;color:#111;transform:scaleX(0.9600);transform-origin:0 0;font-weight:bold;-webkit-text-stroke:0;">Z9: SPE Frame hinten AS</div>
<div class="t" style="left:267.20px;top:545px;font-size:10px;color:#111;transform:scaleX(0.9600);transform-origin:0 0;font-weight:bold;-webkit-text-stroke:0;">52</div>
<div class="t" style="left:300.80px;top:545px;font-size:10px;color:#111;transform:scaleX(0.9600);transform-origin:0 0;font-weight:bold;-webkit-text-stroke:0;">Z9: SPE Frame hinten GS</div>
<div class="t" style="left:267.20px;top:558px;font-size:10px;color:#111;transform:scaleX(0.9600);transform-origin:0 0;font-weight:bold;-webkit-text-stroke:0;">53</div>
<div class="t" style="left:300.80px;top:558px;font-size:10px;color:#111;transform:scaleX(0.9600);transform-origin:0 0;font-weight:bold;-webkit-text-stroke:0;">Z10: Ausdrehung Outletpipe AS</div>
<div class="a" style="left:603px;top:176px;width:14px;height:396px;background:linear-gradient(90deg,#ebebeb,#f5f5f5 40%,#f5f5f5);"></div>
<svg class="a" style="left:607px;top:181px" width="7" height="4" viewBox="0 0 7 4"><path d="M0 4 L3.5 0.5 L7 4Z" fill="#454545"/></svg>
<div class="a" style="left:604px;top:191px;width:12px;height:95px;background:linear-gradient(90deg,#f4f4f4,#e6e6e6 55%,#d6d6d6);border:1px solid #a9a9a9;border-radius:2px;"></div>
<div class="a" style="left:607px;top:235px;width:6px;height:1px;background:#6a6a6a"></div><div class="a" style="left:607px;top:237px;width:6px;height:1px;background:#6a6a6a"></div><div class="a" style="left:607px;top:239px;width:6px;height:1px;background:#6a6a6a"></div>
<svg class="a" style="left:607px;top:563px" width="7" height="4" viewBox="0 0 7 4"><path d="M0 0 L3.5 3.5 L7 0Z" fill="#454545"/></svg>
<div class="a" style="left:248px;top:572px;width:355px;height:15px;background:linear-gradient(#ebebeb,#f5f5f5 40%,#f5f5f5);"></div>
<div class="a" style="left:603px;top:572px;width:14px;height:15px;background:#f0f0f0;"></div>
<svg class="a" style="left:254px;top:576px" width="4" height="7" viewBox="0 0 4 7"><path d="M4 0 L0.5 3.5 L4 7Z" fill="#454545"/></svg>
<div class="a" style="left:263px;top:573px;width:311px;height:13px;background:linear-gradient(#f4f4f4,#e6e6e6 55%,#d6d6d6);border:1px solid #a9a9a9;border-radius:2px;"></div>
<div class="a" style="left:415px;top:576px;width:1px;height:6px;background:#6a6a6a"></div><div class="a" style="left:417px;top:576px;width:1px;height:6px;background:#6a6a6a"></div><div class="a" style="left:419px;top:576px;width:1px;height:6px;background:#6a6a6a"></div>
<svg class="a" style="left:594px;top:576px" width="4" height="7" viewBox="0 0 4 7"><path d="M0 0 L3.5 3.5 L0 7Z" fill="#454545"/></svg>
<div class="a" style="left:620px;top:174px;width:367px;height:414px;background:#fbfbfb;"></div>
<div class="a" style="left:621px;top:175px;width:365px;height:411px;background:#808080;"></div>
<div class="a" style="left:646px;top:192px;width:326px;height:390px;background:#747474;"></div>
<div class="t" style="left:650.24px;top:182px;font-size:10px;color:#111;transform:scaleX(0.8600);transform-origin:0 0;">P1</div>
<div class="t" style="left:670.74px;top:182px;font-size:10px;color:#111;transform:scaleX(0.8600);transform-origin:0 0;">P2</div>
<div class="t" style="left:690.74px;top:182px;font-size:10px;color:#111;transform:scaleX(0.8600);transform-origin:0 0;">P3</div>
<div class="t" style="left:711.24px;top:182px;font-size:10px;color:#111;transform:scaleX(0.8600);transform-origin:0 0;">P4</div>
<div class="t" style="left:731.74px;top:182px;font-size:10px;color:#111;transform:scaleX(0.8600);transform-origin:0 0;">P5</div>
<div class="t" style="left:751.74px;top:182px;font-size:10px;color:#111;transform:scaleX(0.8600);transform-origin:0 0;">P6</div>
<div class="t" style="left:772.24px;top:182px;font-size:10px;color:#111;transform:scaleX(0.8600);transform-origin:0 0;">P7</div>
<div class="t" style="left:792.74px;top:182px;font-size:10px;color:#111;transform:scaleX(0.8600);transform-origin:0 0;">P8</div>
<div class="t" style="left:812.74px;top:182px;font-size:10px;color:#111;transform:scaleX(0.8600);transform-origin:0 0;">P9</div>
<div class="t" style="left:830.85px;top:182px;font-size:10px;color:#111;transform:scaleX(0.8600);transform-origin:0 0;">P10</div>
<div class="t" style="left:851.67px;top:182px;font-size:10px;color:#111;transform:scaleX(0.8600);transform-origin:0 0;">P11</div>
<div class="t" style="left:871.35px;top:182px;font-size:10px;color:#111;transform:scaleX(0.8600);transform-origin:0 0;">P12</div>
<div class="t" style="left:891.85px;top:182px;font-size:10px;color:#111;transform:scaleX(0.8600);transform-origin:0 0;">P13</div>
<div class="t" style="left:912.35px;top:182px;font-size:10px;color:#111;transform:scaleX(0.8600);transform-origin:0 0;">P14</div>
<div class="t" style="left:932.35px;top:182px;font-size:10px;color:#111;transform:scaleX(0.8600);transform-origin:0 0;">P15</div>
<div class="t" style="left:952.85px;top:182px;font-size:10px;color:#111;transform:scaleX(0.8600);transform-origin:0 0;">P16</div>
<div class="t" style="left:630.74px;top:194px;font-size:10px;color:#111;transform:scaleX(0.8600);transform-origin:0 0;">E1</div>
<div class="a" style="left:646px;top:192px;width:19px;height:11px;background:#00f000;border-top:1px solid #5cff5c;border-left:1px solid #5cff5c"></div>
<div class="t" style="left:652.86px;top:194px;font-size:10px;color:#111;transform:scaleX(0.9500);transform-origin:0 0;">2</div>
<div class="a" style="left:667px;top:192px;width:18px;height:11px;background:#00f000;border-top:1px solid #5cff5c;border-left:1px solid #5cff5c"></div>
<div class="t" style="left:668.08px;top:194px;font-size:10px;color:#111;transform:scaleX(0.9500);transform-origin:0 0;">204</div>
<div class="a" style="left:687px;top:192px;width:18px;height:11px;background:#c9c9c9;border-top:1px solid #f2f2f2;border-left:1px solid #f2f2f2"></div>
<div class="a" style="left:707px;top:192px;width:19px;height:11px;background:#c9c9c9;border-top:1px solid #f2f2f2;border-left:1px solid #f2f2f2"></div>
<div class="a" style="left:728px;top:192px;width:18px;height:11px;background:#c9c9c9;border-top:1px solid #f2f2f2;border-left:1px solid #f2f2f2"></div>
<div class="a" style="left:748px;top:192px;width:18px;height:11px;background:#c9c9c9;border-top:1px solid #f2f2f2;border-left:1px solid #f2f2f2"></div>
<div class="a" style="left:768px;top:192px;width:19px;height:11px;background:#c9c9c9;border-top:1px solid #f2f2f2;border-left:1px solid #f2f2f2"></div>
<div class="a" style="left:789px;top:192px;width:18px;height:11px;background:#c9c9c9;border-top:1px solid #f2f2f2;border-left:1px solid #f2f2f2"></div>
<div class="a" style="left:809px;top:192px;width:18px;height:11px;background:#c9c9c9;border-top:1px solid #f2f2f2;border-left:1px solid #f2f2f2"></div>
<div class="a" style="left:829px;top:192px;width:19px;height:11px;background:#c9c9c9;border-top:1px solid #f2f2f2;border-left:1px solid #f2f2f2"></div>
<div class="a" style="left:850px;top:192px;width:18px;height:11px;background:#c9c9c9;border-top:1px solid #f2f2f2;border-left:1px solid #f2f2f2"></div>
<div class="a" style="left:870px;top:192px;width:18px;height:11px;background:#c9c9c9;border-top:1px solid #f2f2f2;border-left:1px solid #f2f2f2"></div>
<div class="a" style="left:890px;top:192px;width:19px;height:11px;background:#c9c9c9;border-top:1px solid #f2f2f2;border-left:1px solid #f2f2f2"></div>
<div class="a" style="left:911px;top:192px;width:18px;height:11px;background:#c9c9c9;border-top:1px solid #f2f2f2;border-left:1px solid #f2f2f2"></div>
<div class="a" style="left:931px;top:192px;width:18px;height:11px;background:#c9c9c9;border-top:1px solid #f2f2f2;border-left:1px solid #f2f2f2"></div>
<div class="a" style="left:951px;top:192px;width:19px;height:11px;background:#c9c9c9;border-top:1px solid #f2f2f2;border-left:1px solid #f2f2f2"></div>
<div class="t" style="left:630.74px;top:207px;font-size:10px;color:#111;transform:scaleX(0.8600);transform-origin:0 0;">E2</div>
<div class="a" style="left:646px;top:205px;width:19px;height:10px;background:#00f000;border-top:1px solid #5cff5c;border-left:1px solid #5cff5c"></div>
<div class="t" style="left:652.86px;top:207px;font-size:10px;color:#111;transform:scaleX(0.9500);transform-origin:0 0;">6</div>
<div class="a" style="left:667px;top:205px;width:18px;height:10px;background:#c9c9c9;border-top:1px solid #f2f2f2;border-left:1px solid #f2f2f2"></div>
<div class="a" style="left:687px;top:205px;width:18px;height:10px;background:#c9c9c9;border-top:1px solid #f2f2f2;border-left:1px solid #f2f2f2"></div>
<div class="a" style="left:707px;top:205px;width:19px;height:10px;background:#c9c9c9;border-top:1px solid #f2f2f2;border-left:1px solid #f2f2f2"></div>
<div class="a" style="left:728px;top:205px;width:18px;height:10px;background:#c9c9c9;border-top:1px solid #f2f2f2;border-left:1px solid #f2f2f2"></div>
<div class="a" style="left:748px;top:205px;width:18px;height:10px;background:#c9c9c9;border-top:1px solid #f2f2f2;border-left:1px solid #f2f2f2"></div>
<div class="a" style="left:768px;top:205px;width:19px;height:10px;background:#c9c9c9;border-top:1px solid #f2f2f2;border-left:1px solid #f2f2f2"></div>
<div class="a" style="left:789px;top:205px;width:18px;height:10px;background:#c9c9c9;border-top:1px solid #f2f2f2;border-left:1px solid #f2f2f2"></div>
<div class="a" style="left:809px;top:205px;width:18px;height:10px;background:#c9c9c9;border-top:1px solid #f2f2f2;border-left:1px solid #f2f2f2"></div>
<div class="a" style="left:829px;top:205px;width:19px;height:10px;background:#c9c9c9;border-top:1px solid #f2f2f2;border-left:1px solid #f2f2f2"></div>
<div class="a" style="left:850px;top:205px;width:18px;height:10px;background:#c9c9c9;border-top:1px solid #f2f2f2;border-left:1px solid #f2f2f2"></div>
<div class="a" style="left:870px;top:205px;width:18px;height:10px;background:#c9c9c9;border-top:1px solid #f2f2f2;border-left:1px solid #f2f2f2"></div>
<div class="a" style="left:890px;top:205px;width:19px;height:10px;background:#c9c9c9;border-top:1px solid #f2f2f2;border-left:1px solid #f2f2f2"></div>
<div class="a" style="left:911px;top:205px;width:18px;height:10px;background:#c9c9c9;border-top:1px solid #f2f2f2;border-left:1px solid #f2f2f2"></div>
<div class="a" style="left:931px;top:205px;width:18px;height:10px;background:#c9c9c9;border-top:1px solid #f2f2f2;border-left:1px solid #f2f2f2"></div>
<div class="a" style="left:951px;top:205px;width:19px;height:10px;background:#c9c9c9;border-top:1px solid #f2f2f2;border-left:1px solid #f2f2f2"></div>
<div class="t" style="left:630.74px;top:219px;font-size:10px;color:#111;transform:scaleX(0.8600);transform-origin:0 0;">E3</div>
<div class="a" style="left:646px;top:217px;width:19px;height:10px;background:#00f000;border-top:1px solid #5cff5c;border-left:1px solid #5cff5c"></div>
<div class="t" style="left:647.58px;top:219px;font-size:10px;color:#111;transform:scaleX(0.9500);transform-origin:0 0;">101</div>
<div class="a" style="left:667px;top:217px;width:18px;height:10px;background:#c9c9c9;border-top:1px solid #f2f2f2;border-left:1px solid #f2f2f2"></div>
<div class="a" style="left:687px;top:217px;width:18px;height:10px;background:#c9c9c9;border-top:1px solid #f2f2f2;border-left:1px solid #f2f2f2"></div>
<div class="a" style="left:707px;top:217px;width:19px;height:10px;background:#c9c9c9;border-top:1px solid #f2f2f2;border-left:1px solid #f2f2f2"></div>
<div class="a" style="left:728px;top:217px;width:18px;height:10px;background:#c9c9c9;border-top:1px solid #f2f2f2;border-left:1px solid #f2f2f2"></div>
<div class="a" style="left:748px;top:217px;width:18px;height:10px;background:#c9c9c9;border-top:1px solid #f2f2f2;border-left:1px solid #f2f2f2"></div>
<div class="a" style="left:768px;top:217px;width:19px;height:10px;background:#c9c9c9;border-top:1px solid #f2f2f2;border-left:1px solid #f2f2f2"></div>
<div class="a" style="left:789px;top:217px;width:18px;height:10px;background:#c9c9c9;border-top:1px solid #f2f2f2;border-left:1px solid #f2f2f2"></div>
<div class="a" style="left:809px;top:217px;width:18px;height:10px;background:#c9c9c9;border-top:1px solid #f2f2f2;border-left:1px solid #f2f2f2"></div>
<div class="a" style="left:829px;top:217px;width:19px;height:10px;background:#c9c9c9;border-top:1px solid #f2f2f2;border-left:1px solid #f2f2f2"></div>
<div class="a" style="left:850px;top:217px;width:18px;height:10px;background:#c9c9c9;border-top:1px solid #f2f2f2;border-left:1px solid #f2f2f2"></div>
<div class="a" style="left:870px;top:217px;width:18px;height:10px;background:#c9c9c9;border-top:1px solid #f2f2f2;border-left:1px solid #f2f2f2"></div>
<div class="a" style="left:890px;top:217px;width:19px;height:10px;background:#c9c9c9;border-top:1px solid #f2f2f2;border-left:1px solid #f2f2f2"></div>
<div class="a" style="left:911px;top:217px;width:18px;height:10px;background:#c9c9c9;border-top:1px solid #f2f2f2;border-left:1px solid #f2f2f2"></div>
<div class="a" style="left:931px;top:217px;width:18px;height:10px;background:#c9c9c9;border-top:1px solid #f2f2f2;border-left:1px solid #f2f2f2"></div>
<div class="a" style="left:951px;top:217px;width:19px;height:10px;background:#c9c9c9;border-top:1px solid #f2f2f2;border-left:1px solid #f2f2f2"></div>
<div class="t" style="left:630.74px;top:231px;font-size:10px;color:#111;transform:scaleX(0.8600);transform-origin:0 0;">E4</div>
<div class="a" style="left:646px;top:229px;width:19px;height:10px;background:#00f000;border-top:1px solid #5cff5c;border-left:1px solid #5cff5c"></div>
<div class="t" style="left:650.22px;top:231px;font-size:10px;color:#111;transform:scaleX(0.9500);transform-origin:0 0;">99</div>
<div class="a" style="left:667px;top:229px;width:18px;height:10px;background:#c9c9c9;border-top:1px solid #f2f2f2;border-left:1px solid #f2f2f2"></div>
<div class="a" style="left:687px;top:229px;width:18px;height:10px;background:#c9c9c9;border-top:1px solid #f2f2f2;border-left:1px solid #f2f2f2"></div>
<div class="a" style="left:707px;top:229px;width:19px;height:10px;background:#c9c9c9;border-top:1px solid #f2f2f2;border-left:1px solid #f2f2f2"></div>
<div class="a" style="left:728px;top:229px;width:18px;height:10px;background:#c9c9c9;border-top:1px solid #f2f2f2;border-left:1px solid #f2f2f2"></div>
<div class="a" style="left:748px;top:229px;width:18px;height:10px;background:#c9c9c9;border-top:1px solid #f2f2f2;border-left:1px solid #f2f2f2"></div>
<div class="a" style="left:768px;top:229px;width:19px;height:10px;background:#c9c9c9;border-top:1px solid #f2f2f2;border-left:1px solid #f2f2f2"></div>
<div class="a" style="left:789px;top:229px;width:18px;height:10px;background:#c9c9c9;border-top:1px solid #f2f2f2;border-left:1px solid #f2f2f2"></div>
<div class="a" style="left:809px;top:229px;width:18px;height:10px;background:#c9c9c9;border-top:1px solid #f2f2f2;border-left:1px solid #f2f2f2"></div>
<div class="a" style="left:829px;top:229px;width:19px;height:10px;background:#c9c9c9;border-top:1px solid #f2f2f2;border-left:1px solid #f2f2f2"></div>
<div class="a" style="left:850px;top:229px;width:18px;height:10px;background:#c9c9c9;border-top:1px solid #f2f2f2;border-left:1px solid #f2f2f2"></div>
<div class="a" style="left:870px;top:229px;width:18px;height:10px;background:#c9c9c9;border-top:1px solid #f2f2f2;border-left:1px solid #f2f2f2"></div>
<div class="a" style="left:890px;top:229px;width:19px;height:10px;background:#c9c9c9;border-top:1px solid #f2f2f2;border-left:1px solid #f2f2f2"></div>
<div class="a" style="left:911px;top:229px;width:18px;height:10px;background:#c9c9c9;border-top:1px solid #f2f2f2;border-left:1px solid #f2f2f2"></div>
<div class="a" style="left:931px;top:229px;width:18px;height:10px;background:#c9c9c9;border-top:1px solid #f2f2f2;border-left:1px solid #f2f2f2"></div>
<div class="a" style="left:951px;top:229px;width:19px;height:10px;background:#c9c9c9;border-top:1px solid #f2f2f2;border-left:1px solid #f2f2f2"></div>
<div class="t" style="left:630.74px;top:243px;font-size:10px;color:#111;transform:scaleX(0.8600);transform-origin:0 0;">E5</div>
<div class="a" style="left:646px;top:241px;width:19px;height:10px;background:#00f000;border-top:1px solid #5cff5c;border-left:1px solid #5cff5c"></div>
<div class="t" style="left:652.86px;top:243px;font-size:10px;color:#111;transform:scaleX(0.9500);transform-origin:0 0;">7</div>
<div class="a" style="left:667px;top:241px;width:18px;height:10px;background:#c9c9c9;border-top:1px solid #f2f2f2;border-left:1px solid #f2f2f2"></div>
<div class="a" style="left:687px;top:241px;width:18px;height:10px;background:#c9c9c9;border-top:1px solid #f2f2f2;border-left:1px solid #f2f2f2"></div>
<div class="a" style="left:707px;top:241px;width:19px;height:10px;background:#c9c9c9;border-top:1px solid #f2f2f2;border-left:1px solid #f2f2f2"></div>
<div class="a" style="left:728px;top:241px;width:18px;height:10px;background:#c9c9c9;border-top:1px solid #f2f2f2;border-left:1px solid #f2f2f2"></div>
<div class="a" style="left:748px;top:241px;width:18px;height:10px;background:#c9c9c9;border-top:1px solid #f2f2f2;border-left:1px solid #f2f2f2"></div>
<div class="a" style="left:768px;top:241px;width:19px;height:10px;background:#c9c9c9;border-top:1px solid #f2f2f2;border-left:1px solid #f2f2f2"></div>
<div class="a" style="left:789px;top:241px;width:18px;height:10px;background:#c9c9c9;border-top:1px solid #f2f2f2;border-left:1px solid #f2f2f2"></div>
<div class="a" style="left:809px;top:241px;width:18px;height:10px;background:#c9c9c9;border-top:1px solid #f2f2f2;border-left:1px solid #f2f2f2"></div>
<div class="a" style="left:829px;top:241px;width:19px;height:10px;background:#c9c9c9;border-top:1px solid #f2f2f2;border-left:1px solid #f2f2f2"></div>
<div class="a" style="left:850px;top:241px;width:18px;height:10px;background:#c9c9c9;border-top:1px solid #f2f2f2;border-left:1px solid #f2f2f2"></div>
<div class="a" style="left:870px;top:241px;width:18px;height:10px;background:#c9c9c9;border-top:1px solid #f2f2f2;border-left:1px solid #f2f2f2"></div>
<div class="a" style="left:890px;top:241px;width:19px;height:10px;background:#c9c9c9;border-top:1px solid #f2f2f2;border-left:1px solid #f2f2f2"></div>
<div class="a" style="left:911px;top:241px;width:18px;height:10px;background:#c9c9c9;border-top:1px solid #f2f2f2;border-left:1px solid #f2f2f2"></div>
<div class="a" style="left:931px;top:241px;width:18px;height:10px;background:#c9c9c9;border-top:1px solid #f2f2f2;border-left:1px solid #f2f2f2"></div>
<div class="a" style="left:951px;top:241px;width:19px;height:10px;background:#c9c9c9;border-top:1px solid #f2f2f2;border-left:1px solid #f2f2f2"></div>
<div class="t" style="left:630.74px;top:255px;font-size:10px;color:#111;transform:scaleX(0.8600);transform-origin:0 0;">E6</div>
<div class="a" style="left:646px;top:253px;width:19px;height:11px;background:#00f000;border-top:1px solid #5cff5c;border-left:1px solid #5cff5c"></div>
<div class="t" style="left:650.22px;top:255px;font-size:10px;color:#111;transform:scaleX(0.9500);transform-origin:0 0;">38</div>
<div class="a" style="left:667px;top:253px;width:18px;height:11px;background:#00f000;border-top:1px solid #5cff5c;border-left:1px solid #5cff5c"></div>
<div class="t" style="left:670.72px;top:255px;font-size:10px;color:#111;transform:scaleX(0.9500);transform-origin:0 0;">55</div>
<div class="a" style="left:687px;top:253px;width:18px;height:11px;background:#c9c9c9;border-top:1px solid #f2f2f2;border-left:1px solid #f2f2f2"></div>
<div class="a" style="left:707px;top:253px;width:19px;height:11px;background:#c9c9c9;border-top:1px solid #f2f2f2;border-left:1px solid #f2f2f2"></div>
<div class="a" style="left:728px;top:253px;width:18px;height:11px;background:#c9c9c9;border-top:1px solid #f2f2f2;border-left:1px solid #f2f2f2"></div>
<div class="a" style="left:748px;top:253px;width:18px;height:11px;background:#c9c9c9;border-top:1px solid #f2f2f2;border-left:1px solid #f2f2f2"></div>
<div class="a" style="left:768px;top:253px;width:19px;height:11px;background:#c9c9c9;border-top:1px solid #f2f2f2;border-left:1px solid #f2f2f2"></div>
<div class="a" style="left:789px;top:253px;width:18px;height:11px;background:#c9c9c9;border-top:1px solid #f2f2f2;border-left:1px solid #f2f2f2"></div>
<div class="a" style="left:809px;top:253px;width:18px;height:11px;background:#c9c9c9;border-top:1px solid #f2f2f2;border-left:1px solid #f2f2f2"></div>
<div class="a" style="left:829px;top:253px;width:19px;height:11px;background:#c9c9c9;border-top:1px solid #f2f2f2;border-left:1px solid #f2f2f2"></div>
<div class="a" style="left:850px;top:253px;width:18px;height:11px;background:#c9c9c9;border-top:1px solid #f2f2f2;border-left:1px solid #f2f2f2"></div>
<div class="a" style="left:870px;top:253px;width:18px;height:11px;background:#c9c9c9;border-top:1px solid #f2f2f2;border-left:1px solid #f2f2f2"></div>
<div class="a" style="left:890px;top:253px;width:19px;height:11px;background:#c9c9c9;border-top:1px solid #f2f2f2;border-left:1px solid #f2f2f2"></div>
<div class="a" style="left:911px;top:253px;width:18px;height:11px;background:#c9c9c9;border-top:1px solid #f2f2f2;border-left:1px solid #f2f2f2"></div>
<div class="a" style="left:931px;top:253px;width:18px;height:11px;background:#c9c9c9;border-top:1px solid #f2f2f2;border-left:1px solid #f2f2f2"></div>
<div class="a" style="left:951px;top:253px;width:19px;height:11px;background:#c9c9c9;border-top:1px solid #f2f2f2;border-left:1px solid #f2f2f2"></div>
<div class="t" style="left:630.74px;top:268px;font-size:10px;color:#111;transform:scaleX(0.8600);transform-origin:0 0;">E7</div>
<div class="a" style="left:646px;top:266px;width:19px;height:10px;background:#00f000;border-top:1px solid #5cff5c;border-left:1px solid #5cff5c"></div>
<div class="t" style="left:650.22px;top:268px;font-size:10px;color:#111;transform:scaleX(0.9500);transform-origin:0 0;">36</div>
<div class="a" style="left:667px;top:266px;width:18px;height:10px;background:#00f000;border-top:1px solid #5cff5c;border-left:1px solid #5cff5c"></div>
<div class="t" style="left:670.72px;top:268px;font-size:10px;color:#111;transform:scaleX(0.9500);transform-origin:0 0;">40</div>
<div class="a" style="left:687px;top:266px;width:18px;height:10px;background:#00f000;border-top:1px solid #5cff5c;border-left:1px solid #5cff5c"></div>
<div class="t" style="left:690.72px;top:268px;font-size:10px;color:#111;transform:scaleX(0.9500);transform-origin:0 0;">88</div>
<div class="a" style="left:707px;top:266px;width:19px;height:10px;background:#c9c9c9;border-top:1px solid #f2f2f2;border-left:1px solid #f2f2f2"></div>
<div class="a" style="left:728px;top:266px;width:18px;height:10px;background:#c9c9c9;border-top:1px solid #f2f2f2;border-left:1px solid #f2f2f2"></div>
<div class="a" style="left:748px;top:266px;width:18px;height:10px;background:#c9c9c9;border-top:1px solid #f2f2f2;border-left:1px solid #f2f2f2"></div>
<div class="a" style="left:768px;top:266px;width:19px;height:10px;background:#c9c9c9;border-top:1px solid #f2f2f2;border-left:1px solid #f2f2f2"></div>
<div class="a" style="left:789px;top:266px;width:18px;height:10px;background:#c9c9c9;border-top:1px solid #f2f2f2;border-left:1px solid #f2f2f2"></div>
<div class="a" style="left:809px;top:266px;width:18px;height:10px;background:#c9c9c9;border-top:1px solid #f2f2f2;border-left:1px solid #f2f2f2"></div>
<div class="a" style="left:829px;top:266px;width:19px;height:10px;background:#c9c9c9;border-top:1px solid #f2f2f2;border-left:1px solid #f2f2f2"></div>
<div class="a" style="left:850px;top:266px;width:18px;height:10px;background:#c9c9c9;border-top:1px solid #f2f2f2;border-left:1px solid #f2f2f2"></div>
<div class="a" style="left:870px;top:266px;width:18px;height:10px;background:#c9c9c9;border-top:1px solid #f2f2f2;border-left:1px solid #f2f2f2"></div>
<div class="a" style="left:890px;top:266px;width:19px;height:10px;background:#c9c9c9;border-top:1px solid #f2f2f2;border-left:1px solid #f2f2f2"></div>
<div class="a" style="left:911px;top:266px;width:18px;height:10px;background:#c9c9c9;border-top:1px solid #f2f2f2;border-left:1px solid #f2f2f2"></div>
<div class="a" style="left:931px;top:266px;width:18px;height:10px;background:#c9c9c9;border-top:1px solid #f2f2f2;border-left:1px solid #f2f2f2"></div>
<div class="a" style="left:951px;top:266px;width:19px;height:10px;background:#c9c9c9;border-top:1px solid #f2f2f2;border-left:1px solid #f2f2f2"></div>
<div class="t" style="left:630.74px;top:280px;font-size:10px;color:#111;transform:scaleX(0.8600);transform-origin:0 0;">E8</div>
<div class="a" style="left:646px;top:278px;width:19px;height:10px;background:#00f000;border-top:1px solid #5cff5c;border-left:1px solid #5cff5c"></div>
<div class="t" style="left:647.58px;top:280px;font-size:10px;color:#111;transform:scaleX(0.9500);transform-origin:0 0;">192</div>
<div class="a" style="left:667px;top:278px;width:18px;height:10px;background:#c9c9c9;border-top:1px solid #f2f2f2;border-left:1px solid #f2f2f2"></div>
<div class="a" style="left:687px;top:278px;width:18px;height:10px;background:#c9c9c9;border-top:1px solid #f2f2f2;border-left:1px solid #f2f2f2"></div>
<div class="a" style="left:707px;top:278px;width:19px;height:10px;background:#c9c9c9;border-top:1px solid #f2f2f2;border-left:1px solid #f2f2f2"></div>
<div class="a" style="left:728px;top:278px;width:18px;height:10px;background:#c9c9c9;border-top:1px solid #f2f2f2;border-left:1px solid #f2f2f2"></div>
<div class="a" style="left:748px;top:278px;width:18px;height:10px;background:#c9c9c9;border-top:1px solid #f2f2f2;border-left:1px solid #f2f2f2"></div>
<div class="a" style="left:768px;top:278px;width:19px;height:10px;background:#c9c9c9;border-top:1px solid #f2f2f2;border-left:1px solid #f2f2f2"></div>
<div class="a" style="left:789px;top:278px;width:18px;height:10px;background:#c9c9c9;border-top:1px solid #f2f2f2;border-left:1px solid #f2f2f2"></div>
<div class="a" style="left:809px;top:278px;width:18px;height:10px;background:#c9c9c9;border-top:1px solid #f2f2f2;border-left:1px solid #f2f2f2"></div>
<div class="a" style="left:829px;top:278px;width:19px;height:10px;background:#c9c9c9;border-top:1px solid #f2f2f2;border-left:1px solid #f2f2f2"></div>
<div class="a" style="left:850px;top:278px;width:18px;height:10px;background:#c9c9c9;border-top:1px solid #f2f2f2;border-left:1px solid #f2f2f2"></div>
<div class="a" style="left:870px;top:278px;width:18px;height:10px;background:#c9c9c9;border-top:1px solid #f2f2f2;border-left:1px solid #f2f2f2"></div>
<div class="a" style="left:890px;top:278px;width:19px;height:10px;background:#c9c9c9;border-top:1px solid #f2f2f2;border-left:1px solid #f2f2f2"></div>
<div class="a" style="left:911px;top:278px;width:18px;height:10px;background:#c9c9c9;border-top:1px solid #f2f2f2;border-left:1px solid #f2f2f2"></div>
<div class="a" style="left:931px;top:278px;width:18px;height:10px;background:#c9c9c9;border-top:1px solid #f2f2f2;border-left:1px solid #f2f2f2"></div>
<div class="a" style="left:951px;top:278px;width:19px;height:10px;background:#c9c9c9;border-top:1px solid #f2f2f2;border-left:1px solid #f2f2f2"></div>
<div class="t" style="left:630.74px;top:292px;font-size:10px;color:#111;transform:scaleX(0.8600);transform-origin:0 0;">E9</div>
<div class="a" style="left:646px;top:290px;width:19px;height:10px;background:#00f000;border-top:1px solid #5cff5c;border-left:1px solid #5cff5c"></div>
<div class="t" style="left:647.58px;top:292px;font-size:10px;color:#111;transform:scaleX(0.9500);transform-origin:0 0;">171</div>
<div class="a" style="left:667px;top:290px;width:18px;height:10px;background:#c9c9c9;border-top:1px solid #f2f2f2;border-left:1px solid #f2f2f2"></div>
<div class="a" style="left:687px;top:290px;width:18px;height:10px;background:#c9c9c9;border-top:1px solid #f2f2f2;border-left:1px solid #f2f2f2"></div>
<div class="a" style="left:707px;top:290px;width:19px;height:10px;background:#c9c9c9;border-top:1px solid #f2f2f2;border-left:1px solid #f2f2f2"></div>
<div class="a" style="left:728px;top:290px;width:18px;height:10px;background:#c9c9c9;border-top:1px solid #f2f2f2;border-left:1px solid #f2f2f2"></div>
<div class="a" style="left:748px;top:290px;width:18px;height:10px;background:#c9c9c9;border-top:1px solid #f2f2f2;border-left:1px solid #f2f2f2"></div>
<div class="a" style="left:768px;top:290px;width:19px;height:10px;background:#c9c9c9;border-top:1px solid #f2f2f2;border-left:1px solid #f2f2f2"></div>
<div class="a" style="left:789px;top:290px;width:18px;height:10px;background:#c9c9c9;border-top:1px solid #f2f2f2;border-left:1px solid #f2f2f2"></div>
<div class="a" style="left:809px;top:290px;width:18px;height:10px;background:#c9c9c9;border-top:1px solid #f2f2f2;border-left:1px solid #f2f2f2"></div>
<div class="a" style="left:829px;top:290px;width:19px;height:10px;background:#c9c9c9;border-top:1px solid #f2f2f2;border-left:1px solid #f2f2f2"></div>
<div class="a" style="left:850px;top:290px;width:18px;height:10px;background:#c9c9c9;border-top:1px solid #f2f2f2;border-left:1px solid #f2f2f2"></div>
<div class="a" style="left:870px;top:290px;width:18px;height:10px;background:#c9c9c9;border-top:1px solid #f2f2f2;border-left:1px solid #f2f2f2"></div>
<div class="a" style="left:890px;top:290px;width:19px;height:10px;background:#c9c9c9;border-top:1px solid #f2f2f2;border-left:1px solid #f2f2f2"></div>
<div class="a" style="left:911px;top:290px;width:18px;height:10px;background:#c9c9c9;border-top:1px solid #f2f2f2;border-left:1px solid #f2f2f2"></div>
<div class="a" style="left:931px;top:290px;width:18px;height:10px;background:#c9c9c9;border-top:1px solid #f2f2f2;border-left:1px solid #f2f2f2"></div>
<div class="a" style="left:951px;top:290px;width:19px;height:10px;background:#c9c9c9;border-top:1px solid #f2f2f2;border-left:1px solid #f2f2f2"></div>
<div class="t" style="left:628.35px;top:304px;font-size:10px;color:#111;transform:scaleX(0.8600);transform-origin:0 0;">E10</div>
<div class="a" style="left:646px;top:302px;width:19px;height:10px;background:#00f000;border-top:1px solid #5cff5c;border-left:1px solid #5cff5c"></div>
<div class="t" style="left:647.58px;top:304px;font-size:10px;color:#111;transform:scaleX(0.9500);transform-origin:0 0;">188</div>
<div class="a" style="left:667px;top:302px;width:18px;height:10px;background:#c9c9c9;border-top:1px solid #f2f2f2;border-left:1px solid #f2f2f2"></div>
<div class="a" style="left:687px;top:302px;width:18px;height:10px;background:#c9c9c9;border-top:1px solid #f2f2f2;border-left:1px solid #f2f2f2"></div>
<div class="a" style="left:707px;top:302px;width:19px;height:10px;background:#c9c9c9;border-top:1px solid #f2f2f2;border-left:1px solid #f2f2f2"></div>
<div class="a" style="left:728px;top:302px;width:18px;height:10px;background:#c9c9c9;border-top:1px solid #f2f2f2;border-left:1px solid #f2f2f2"></div>
<div class="a" style="left:748px;top:302px;width:18px;height:10px;background:#c9c9c9;border-top:1px solid #f2f2f2;border-left:1px solid #f2f2f2"></div>
<div class="a" style="left:768px;top:302px;width:19px;height:10px;background:#c9c9c9;border-top:1px solid #f2f2f2;border-left:1px solid #f2f2f2"></div>
<div class="a" style="left:789px;top:302px;width:18px;height:10px;background:#c9c9c9;border-top:1px solid #f2f2f2;border-left:1px solid #f2f2f2"></div>
<div class="a" style="left:809px;top:302px;width:18px;height:10px;background:#c9c9c9;border-top:1px solid #f2f2f2;border-left:1px solid #f2f2f2"></div>
<div class="a" style="left:829px;top:302px;width:19px;height:10px;background:#c9c9c9;border-top:1px solid #f2f2f2;border-left:1px solid #f2f2f2"></div>
<div class="a" style="left:850px;top:302px;width:18px;height:10px;background:#c9c9c9;border-top:1px solid #f2f2f2;border-left:1px solid #f2f2f2"></div>
<div class="a" style="left:870px;top:302px;width:18px;height:10px;background:#c9c9c9;border-top:1px solid #f2f2f2;border-left:1px solid #f2f2f2"></div>
<div class="a" style="left:890px;top:302px;width:19px;height:10px;background:#c9c9c9;border-top:1px solid #f2f2f2;border-left:1px solid #f2f2f2"></div>
<div class="a" style="left:911px;top:302px;width:18px;height:10px;background:#c9c9c9;border-top:1px solid #f2f2f2;border-left:1px solid #f2f2f2"></div>
<div class="a" style="left:931px;top:302px;width:18px;height:10px;background:#c9c9c9;border-top:1px solid #f2f2f2;border-left:1px solid #f2f2f2"></div>
<div class="a" style="left:951px;top:302px;width:19px;height:10px;background:#c9c9c9;border-top:1px solid #f2f2f2;border-left:1px solid #f2f2f2"></div>
<div class="t" style="left:628.67px;top:316px;font-size:10px;color:#111;transform:scaleX(0.8600);transform-origin:0 0;">E11</div>
<div class="a" style="left:646px;top:314px;width:19px;height:10px;background:#00f000;border-top:1px solid #5cff5c;border-left:1px solid #5cff5c"></div>
<div class="t" style="left:647.58px;top:316px;font-size:10px;color:#111;transform:scaleX(0.9500);transform-origin:0 0;">189</div>
<div class="a" style="left:667px;top:314px;width:18px;height:10px;background:#c9c9c9;border-top:1px solid #f2f2f2;border-left:1px solid #f2f2f2"></div>
<div class="a" style="left:687px;top:314px;width:18px;height:10px;background:#c9c9c9;border-top:1px solid #f2f2f2;border-left:1px solid #f2f2f2"></div>
<div class="a" style="left:707px;top:314px;width:19px;height:10px;background:#c9c9c9;border-top:1px solid #f2f2f2;border-left:1px solid #f2f2f2"></div>
<div class="a" style="left:728px;top:314px;width:18px;height:10px;background:#c9c9c9;border-top:1px solid #f2f2f2;border-left:1px solid #f2f2f2"></div>
<div class="a" style="left:748px;top:314px;width:18px;height:10px;background:#c9c9c9;border-top:1px solid #f2f2f2;border-left:1px solid #f2f2f2"></div>
<div class="a" style="left:768px;top:314px;width:19px;height:10px;background:#c9c9c9;border-top:1px solid #f2f2f2;border-left:1px solid #f2f2f2"></div>
<div class="a" style="left:789px;top:314px;width:18px;height:10px;background:#c9c9c9;border-top:1px solid #f2f2f2;border-left:1px solid #f2f2f2"></div>
<div class="a" style="left:809px;top:314px;width:18px;height:10px;background:#c9c9c9;border-top:1px solid #f2f2f2;border-left:1px solid #f2f2f2"></div>
<div class="a" style="left:829px;top:314px;width:19px;height:10px;background:#c9c9c9;border-top:1px solid #f2f2f2;border-left:1px solid #f2f2f2"></div>
<div class="a" style="left:850px;top:314px;width:18px;height:10px;background:#c9c9c9;border-top:1px solid #f2f2f2;border-left:1px solid #f2f2f2"></div>
<div class="a" style="left:870px;top:314px;width:18px;height:10px;background:#c9c9c9;border-top:1px solid #f2f2f2;border-left:1px solid #f2f2f2"></div>
<div class="a" style="left:890px;top:314px;width:19px;height:10px;background:#c9c9c9;border-top:1px solid #f2f2f2;border-left:1px solid #f2f2f2"></div>
<div class="a" style="left:911px;top:314px;width:18px;height:10px;background:#c9c9c9;border-top:1px solid #f2f2f2;border-left:1px solid #f2f2f2"></div>
<div class="a" style="left:931px;top:314px;width:18px;height:10px;background:#c9c9c9;border-top:1px solid #f2f2f2;border-left:1px solid #f2f2f2"></div>
<div class="a" style="left:951px;top:314px;width:19px;height:10px;background:#c9c9c9;border-top:1px solid #f2f2f2;border-left:1px solid #f2f2f2"></div>
<div class="t" style="left:628.35px;top:328px;font-size:10px;color:#111;transform:scaleX(0.8600);transform-origin:0 0;">E12</div>
<div class="a" style="left:646px;top:326px;width:19px;height:11px;background:#00f000;border-top:1px solid #5cff5c;border-left:1px solid #5cff5c"></div>
<div class="t" style="left:647.58px;top:328px;font-size:10px;color:#111;transform:scaleX(0.9500);transform-origin:0 0;">193</div>
<div class="a" style="left:667px;top:326px;width:18px;height:11px;background:#c9c9c9;border-top:1px solid #f2f2f2;border-left:1px solid #f2f2f2"></div>
<div class="a" style="left:687px;top:326px;width:18px;height:11px;background:#c9c9c9;border-top:1px solid #f2f2f2;border-left:1px solid #f2f2f2"></div>
<div class="a" style="left:707px;top:326px;width:19px;height:11px;background:#c9c9c9;border-top:1px solid #f2f2f2;border-left:1px solid #f2f2f2"></div>
<div class="a" style="left:728px;top:326px;width:18px;height:11px;background:#c9c9c9;border-top:1px solid #f2f2f2;border-left:1px solid #f2f2f2"></div>
<div class="a" style="left:748px;top:326px;width:18px;height:11px;background:#c9c9c9;border-top:1px solid #f2f2f2;border-left:1px solid #f2f2f2"></div>
<div class="a" style="left:768px;top:326px;width:19px;height:11px;background:#c9c9c9;border-top:1px solid #f2f2f2;border-left:1px solid #f2f2f2"></div>
<div class="a" style="left:789px;top:326px;width:18px;height:11px;background:#c9c9c9;border-top:1px solid #f2f2f2;border-left:1px solid #f2f2f2"></div>
<div class="a" style="left:809px;top:326px;width:18px;height:11px;background:#c9c9c9;border-top:1px solid #f2f2f2;border-left:1px solid #f2f2f2"></div>
<div class="a" style="left:829px;top:326px;width:19px;height:11px;background:#c9c9c9;border-top:1px solid #f2f2f2;border-left:1px solid #f2f2f2"></div>
<div class="a" style="left:850px;top:326px;width:18px;height:11px;background:#c9c9c9;border-top:1px solid #f2f2f2;border-left:1px solid #f2f2f2"></div>
<div class="a" style="left:870px;top:326px;width:18px;height:11px;background:#c9c9c9;border-top:1px solid #f2f2f2;border-left:1px solid #f2f2f2"></div>
<div class="a" style="left:890px;top:326px;width:19px;height:11px;background:#c9c9c9;border-top:1px solid #f2f2f2;border-left:1px solid #f2f2f2"></div>
<div class="a" style="left:911px;top:326px;width:18px;height:11px;background:#c9c9c9;border-top:1px solid #f2f2f2;border-left:1px solid #f2f2f2"></div>
<div class="a" style="left:931px;top:326px;width:18px;height:11px;background:#c9c9c9;border-top:1px solid #f2f2f2;border-left:1px solid #f2f2f2"></div>
<div class="a" style="left:951px;top:326px;width:19px;height:11px;background:#c9c9c9;border-top:1px solid #f2f2f2;border-left:1px solid #f2f2f2"></div>
<div class="t" style="left:628.35px;top:341px;font-size:10px;color:#111;transform:scaleX(0.8600);transform-origin:0 0;">E13</div>
<div class="a" style="left:646px;top:339px;width:19px;height:10px;background:#00f000;border-top:1px solid #5cff5c;border-left:1px solid #5cff5c"></div>
<div class="t" style="left:650.22px;top:341px;font-size:10px;color:#111;transform:scaleX(0.9500);transform-origin:0 0;">37</div>
<div class="a" style="left:667px;top:339px;width:18px;height:10px;background:#00f000;border-top:1px solid #5cff5c;border-left:1px solid #5cff5c"></div>
<div class="t" style="left:670.72px;top:341px;font-size:10px;color:#111;transform:scaleX(0.9500);transform-origin:0 0;">44</div>
<div class="a" style="left:687px;top:339px;width:18px;height:10px;background:#00f000;border-top:1px solid #5cff5c;border-left:1px solid #5cff5c"></div>
<div class="t" style="left:690.72px;top:341px;font-size:10px;color:#111;transform:scaleX(0.9500);transform-origin:0 0;">64</div>
<div class="a" style="left:707px;top:339px;width:19px;height:10px;background:#c9c9c9;border-top:1px solid #f2f2f2;border-left:1px solid #f2f2f2"></div>
<div class="a" style="left:728px;top:339px;width:18px;height:10px;background:#c9c9c9;border-top:1px solid #f2f2f2;border-left:1px solid #f2f2f2"></div>
<div class="a" style="left:748px;top:339px;width:18px;height:10px;background:#c9c9c9;border-top:1px solid #f2f2f2;border-left:1px solid #f2f2f2"></div>
<div class="a" style="left:768px;top:339px;width:19px;height:10px;background:#c9c9c9;border-top:1px solid #f2f2f2;border-left:1px solid #f2f2f2"></div>
<div class="a" style="left:789px;top:339px;width:18px;height:10px;background:#c9c9c9;border-top:1px solid #f2f2f2;border-left:1px solid #f2f2f2"></div>
<div class="a" style="left:809px;top:339px;width:18px;height:10px;background:#c9c9c9;border-top:1px solid #f2f2f2;border-left:1px solid #f2f2f2"></div>
<div class="a" style="left:829px;top:339px;width:19px;height:10px;background:#c9c9c9;border-top:1px solid #f2f2f2;border-left:1px solid #f2f2f2"></div>
<div class="a" style="left:850px;top:339px;width:18px;height:10px;background:#c9c9c9;border-top:1px solid #f2f2f2;border-left:1px solid #f2f2f2"></div>
<div class="a" style="left:870px;top:339px;width:18px;height:10px;background:#c9c9c9;border-top:1px solid #f2f2f2;border-left:1px solid #f2f2f2"></div>
<div class="a" style="left:890px;top:339px;width:19px;height:10px;background:#c9c9c9;border-top:1px solid #f2f2f2;border-left:1px solid #f2f2f2"></div>
<div class="a" style="left:911px;top:339px;width:18px;height:10px;background:#c9c9c9;border-top:1px solid #f2f2f2;border-left:1px solid #f2f2f2"></div>
<div class="a" style="left:931px;top:339px;width:18px;height:10px;background:#c9c9c9;border-top:1px solid #f2f2f2;border-left:1px solid #f2f2f2"></div>
<div class="a" style="left:951px;top:339px;width:19px;height:10px;background:#c9c9c9;border-top:1px solid #f2f2f2;border-left:1px solid #f2f2f2"></div>
<div class="t" style="left:628.35px;top:353px;font-size:10px;color:#111;transform:scaleX(0.8600);transform-origin:0 0;">E14</div>
<div class="a" style="left:646px;top:351px;width:19px;height:10px;background:#00f000;border-top:1px solid #5cff5c;border-left:1px solid #5cff5c"></div>
<div class="t" style="left:650.22px;top:353px;font-size:10px;color:#111;transform:scaleX(0.9500);transform-origin:0 0;">59</div>
<div class="a" style="left:667px;top:351px;width:18px;height:10px;background:#c9c9c9;border-top:1px solid #f2f2f2;border-left:1px solid #f2f2f2"></div>
<div class="a" style="left:687px;top:351px;width:18px;height:10px;background:#c9c9c9;border-top:1px solid #f2f2f2;border-left:1px solid #f2f2f2"></div>
<div class="a" style="left:707px;top:351px;width:19px;height:10px;background:#c9c9c9;border-top:1px solid #f2f2f2;border-left:1px solid #f2f2f2"></div>
<div class="a" style="left:728px;top:351px;width:18px;height:10px;background:#c9c9c9;border-top:1px solid #f2f2f2;border-left:1px solid #f2f2f2"></div>
<div class="a" style="left:748px;top:351px;width:18px;height:10px;background:#c9c9c9;border-top:1px solid #f2f2f2;border-left:1px solid #f2f2f2"></div>
<div class="a" style="left:768px;top:351px;width:19px;height:10px;background:#c9c9c9;border-top:1px solid #f2f2f2;border-left:1px solid #f2f2f2"></div>
<div class="a" style="left:789px;top:351px;width:18px;height:10px;background:#c9c9c9;border-top:1px solid #f2f2f2;border-left:1px solid #f2f2f2"></div>
<div class="a" style="left:809px;top:351px;width:18px;height:10px;background:#c9c9c9;border-top:1px solid #f2f2f2;border-left:1px solid #f2f2f2"></div>
<div class="a" style="left:829px;top:351px;width:19px;height:10px;background:#c9c9c9;border-top:1px solid #f2f2f2;border-left:1px solid #f2f2f2"></div>
<div class="a" style="left:850px;top:351px;width:18px;height:10px;background:#c9c9c9;border-top:1px solid #f2f2f2;border-left:1px solid #f2f2f2"></div>
<div class="a" style="left:870px;top:351px;width:18px;height:10px;background:#c9c9c9;border-top:1px solid #f2f2f2;border-left:1px solid #f2f2f2"></div>
<div class="a" style="left:890px;top:351px;width:19px;height:10px;background:#c9c9c9;border-top:1px solid #f2f2f2;border-left:1px solid #f2f2f2"></div>
<div class="a" style="left:911px;top:351px;width:18px;height:10px;background:#c9c9c9;border-top:1px solid #f2f2f2;border-left:1px solid #f2f2f2"></div>
<div class="a" style="left:931px;top:351px;width:18px;height:10px;background:#c9c9c9;border-top:1px solid #f2f2f2;border-left:1px solid #f2f2f2"></div>
<div class="a" style="left:951px;top:351px;width:19px;height:10px;background:#c9c9c9;border-top:1px solid #f2f2f2;border-left:1px solid #f2f2f2"></div>
<div class="t" style="left:628.35px;top:365px;font-size:10px;color:#111;transform:scaleX(0.8600);transform-origin:0 0;">E15</div>
<div class="a" style="left:646px;top:363px;width:19px;height:10px;background:#c9c9c9;border-top:1px solid #f2f2f2;border-left:1px solid #f2f2f2"></div>
<div class="a" style="left:667px;top:363px;width:18px;height:10px;background:#c9c9c9;border-top:1px solid #f2f2f2;border-left:1px solid #f2f2f2"></div>
<div class="a" style="left:687px;top:363px;width:18px;height:10px;background:#c9c9c9;border-top:1px solid #f2f2f2;border-left:1px solid #f2f2f2"></div>
<div class="a" style="left:707px;top:363px;width:19px;height:10px;background:#c9c9c9;border-top:1px solid #f2f2f2;border-left:1px solid #f2f2f2"></div>
<div class="a" style="left:728px;top:363px;width:18px;height:10px;background:#c9c9c9;border-top:1px solid #f2f2f2;border-left:1px solid #f2f2f2"></div>
<div class="a" style="left:748px;top:363px;width:18px;height:10px;background:#c9c9c9;border-top:1px solid #f2f2f2;border-left:1px solid #f2f2f2"></div>
<div class="a" style="left:768px;top:363px;width:19px;height:10px;background:#c9c9c9;border-top:1px solid #f2f2f2;border-left:1px solid #f2f2f2"></div>
<div class="a" style="left:789px;top:363px;width:18px;height:10px;background:#c9c9c9;border-top:1px solid #f2f2f2;border-left:1px solid #f2f2f2"></div>
<div class="a" style="left:809px;top:363px;width:18px;height:10px;background:#c9c9c9;border-top:1px solid #f2f2f2;border-left:1px solid #f2f2f2"></div>
<div class="a" style="left:829px;top:363px;width:19px;height:10px;background:#c9c9c9;border-top:1px solid #f2f2f2;border-left:1px solid #f2f2f2"></div>
<div class="a" style="left:850px;top:363px;width:18px;height:10px;background:#c9c9c9;border-top:1px solid #f2f2f2;border-left:1px solid #f2f2f2"></div>
<div class="a" style="left:870px;top:363px;width:18px;height:10px;background:#c9c9c9;border-top:1px solid #f2f2f2;border-left:1px solid #f2f2f2"></div>
<div class="a" style="left:890px;top:363px;width:19px;height:10px;background:#c9c9c9;border-top:1px solid #f2f2f2;border-left:1px solid #f2f2f2"></div>
<div class="a" style="left:911px;top:363px;width:18px;height:10px;background:#c9c9c9;border-top:1px solid #f2f2f2;border-left:1px solid #f2f2f2"></div>
<div class="a" style="left:931px;top:363px;width:18px;height:10px;background:#c9c9c9;border-top:1px solid #f2f2f2;border-left:1px solid #f2f2f2"></div>
<div class="a" style="left:951px;top:363px;width:19px;height:10px;background:#c9c9c9;border-top:1px solid #f2f2f2;border-left:1px solid #f2f2f2"></div>
<div class="t" style="left:628.35px;top:377px;font-size:10px;color:#111;transform:scaleX(0.8600);transform-origin:0 0;">E16</div>
<div class="a" style="left:646px;top:375px;width:19px;height:10px;background:#00f000;border-top:1px solid #5cff5c;border-left:1px solid #5cff5c"></div>
<div class="t" style="left:647.58px;top:377px;font-size:10px;color:#111;transform:scaleX(0.9500);transform-origin:0 0;">203</div>
<div class="a" style="left:667px;top:375px;width:18px;height:10px;background:#00f000;border-top:1px solid #5cff5c;border-left:1px solid #5cff5c"></div>
<div class="t" style="left:668.08px;top:377px;font-size:10px;color:#111;transform:scaleX(0.9500);transform-origin:0 0;">200</div>
<div class="a" style="left:687px;top:375px;width:18px;height:10px;background:#c9c9c9;border-top:1px solid #f2f2f2;border-left:1px solid #f2f2f2"></div>
<div class="a" style="left:707px;top:375px;width:19px;height:10px;background:#c9c9c9;border-top:1px solid #f2f2f2;border-left:1px solid #f2f2f2"></div>
<div class="a" style="left:728px;top:375px;width:18px;height:10px;background:#c9c9c9;border-top:1px solid #f2f2f2;border-left:1px solid #f2f2f2"></div>
<div class="a" style="left:748px;top:375px;width:18px;height:10px;background:#c9c9c9;border-top:1px solid #f2f2f2;border-left:1px solid #f2f2f2"></div>
<div class="a" style="left:768px;top:375px;width:19px;height:10px;background:#c9c9c9;border-top:1px solid #f2f2f2;border-left:1px solid #f2f2f2"></div>
<div class="a" style="left:789px;top:375px;width:18px;height:10px;background:#c9c9c9;border-top:1px solid #f2f2f2;border-left:1px solid #f2f2f2"></div>
<div class="a" style="left:809px;top:375px;width:18px;height:10px;background:#c9c9c9;border-top:1px solid #f2f2f2;border-left:1px solid #f2f2f2"></div>
<div class="a" style="left:829px;top:375px;width:19px;height:10px;background:#c9c9c9;border-top:1px solid #f2f2f2;border-left:1px solid #f2f2f2"></div>
<div class="a" style="left:850px;top:375px;width:18px;height:10px;background:#c9c9c9;border-top:1px solid #f2f2f2;border-left:1px solid #f2f2f2"></div>
<div class="a" style="left:870px;top:375px;width:18px;height:10px;background:#c9c9c9;border-top:1px solid #f2f2f2;border-left:1px solid #f2f2f2"></div>
<div class="a" style="left:890px;top:375px;width:19px;height:10px;background:#c9c9c9;border-top:1px solid #f2f2f2;border-left:1px solid #f2f2f2"></div>
<div class="a" style="left:911px;top:375px;width:18px;height:10px;background:#c9c9c9;border-top:1px solid #f2f2f2;border-left:1px solid #f2f2f2"></div>
<div class="a" style="left:931px;top:375px;width:18px;height:10px;background:#c9c9c9;border-top:1px solid #f2f2f2;border-left:1px solid #f2f2f2"></div>
<div class="a" style="left:951px;top:375px;width:19px;height:10px;background:#c9c9c9;border-top:1px solid #f2f2f2;border-left:1px solid #f2f2f2"></div>
<div class="t" style="left:628.35px;top:389px;font-size:10px;color:#111;transform:scaleX(0.8600);transform-origin:0 0;">E17</div>
<div class="a" style="left:646px;top:387px;width:19px;height:11px;background:#c9c9c9;border-top:1px solid #f2f2f2;border-left:1px solid #f2f2f2"></div>
<div class="a" style="left:667px;top:387px;width:18px;height:11px;background:#c9c9c9;border-top:1px solid #f2f2f2;border-left:1px solid #f2f2f2"></div>
<div class="a" style="left:687px;top:387px;width:18px;height:11px;background:#c9c9c9;border-top:1px solid #f2f2f2;border-left:1px solid #f2f2f2"></div>
<div class="a" style="left:707px;top:387px;width:19px;height:11px;background:#c9c9c9;border-top:1px solid #f2f2f2;border-left:1px solid #f2f2f2"></div>
<div class="a" style="left:728px;top:387px;width:18px;height:11px;background:#c9c9c9;border-top:1px solid #f2f2f2;border-left:1px solid #f2f2f2"></div>
<div class="a" style="left:748px;top:387px;width:18px;height:11px;background:#c9c9c9;border-top:1px solid #f2f2f2;border-left:1px solid #f2f2f2"></div>
<div class="a" style="left:768px;top:387px;width:19px;height:11px;background:#c9c9c9;border-top:1px solid #f2f2f2;border-left:1px solid #f2f2f2"></div>
<div class="a" style="left:789px;top:387px;width:18px;height:11px;background:#c9c9c9;border-top:1px solid #f2f2f2;border-left:1px solid #f2f2f2"></div>
<div class="a" style="left:809px;top:387px;width:18px;height:11px;background:#c9c9c9;border-top:1px solid #f2f2f2;border-left:1px solid #f2f2f2"></div>
<div class="a" style="left:829px;top:387px;width:19px;height:11px;background:#c9c9c9;border-top:1px solid #f2f2f2;border-left:1px solid #f2f2f2"></div>
<div class="a" style="left:850px;top:387px;width:18px;height:11px;background:#c9c9c9;border-top:1px solid #f2f2f2;border-left:1px solid #f2f2f2"></div>
<div class="a" style="left:870px;top:387px;width:18px;height:11px;background:#c9c9c9;border-top:1px solid #f2f2f2;border-left:1px solid #f2f2f2"></div>
<div class="a" style="left:890px;top:387px;width:19px;height:11px;background:#c9c9c9;border-top:1px solid #f2f2f2;border-left:1px solid #f2f2f2"></div>
<div class="a" style="left:911px;top:387px;width:18px;height:11px;background:#c9c9c9;border-top:1px solid #f2f2f2;border-left:1px solid #f2f2f2"></div>
<div class="a" style="left:931px;top:387px;width:18px;height:11px;background:#c9c9c9;border-top:1px solid #f2f2f2;border-left:1px solid #f2f2f2"></div>
<div class="a" style="left:951px;top:387px;width:19px;height:11px;background:#c9c9c9;border-top:1px solid #f2f2f2;border-left:1px solid #f2f2f2"></div>
<div class="t" style="left:628.35px;top:402px;font-size:10px;color:#111;transform:scaleX(0.8600);transform-origin:0 0;">E18</div>
<div class="a" style="left:646px;top:400px;width:19px;height:10px;background:#00f000;border-top:1px solid #5cff5c;border-left:1px solid #5cff5c"></div>
<div class="t" style="left:652.86px;top:402px;font-size:10px;color:#111;transform:scaleX(0.9500);transform-origin:0 0;">4</div>
<div class="a" style="left:667px;top:400px;width:18px;height:10px;background:#c9c9c9;border-top:1px solid #f2f2f2;border-left:1px solid #f2f2f2"></div>
<div class="a" style="left:687px;top:400px;width:18px;height:10px;background:#c9c9c9;border-top:1px solid #f2f2f2;border-left:1px solid #f2f2f2"></div>
<div class="a" style="left:707px;top:400px;width:19px;height:10px;background:#c9c9c9;border-top:1px solid #f2f2f2;border-left:1px solid #f2f2f2"></div>
<div class="a" style="left:728px;top:400px;width:18px;height:10px;background:#c9c9c9;border-top:1px solid #f2f2f2;border-left:1px solid #f2f2f2"></div>
<div class="a" style="left:748px;top:400px;width:18px;height:10px;background:#c9c9c9;border-top:1px solid #f2f2f2;border-left:1px solid #f2f2f2"></div>
<div class="a" style="left:768px;top:400px;width:19px;height:10px;background:#c9c9c9;border-top:1px solid #f2f2f2;border-left:1px solid #f2f2f2"></div>
<div class="a" style="left:789px;top:400px;width:18px;height:10px;background:#c9c9c9;border-top:1px solid #f2f2f2;border-left:1px solid #f2f2f2"></div>
<div class="a" style="left:809px;top:400px;width:18px;height:10px;background:#c9c9c9;border-top:1px solid #f2f2f2;border-left:1px solid #f2f2f2"></div>
<div class="a" style="left:829px;top:400px;width:19px;height:10px;background:#c9c9c9;border-top:1px solid #f2f2f2;border-left:1px solid #f2f2f2"></div>
<div class="a" style="left:850px;top:400px;width:18px;height:10px;background:#c9c9c9;border-top:1px solid #f2f2f2;border-left:1px solid #f2f2f2"></div>
<div class="a" style="left:870px;top:400px;width:18px;height:10px;background:#c9c9c9;border-top:1px solid #f2f2f2;border-left:1px solid #f2f2f2"></div>
<div class="a" style="left:890px;top:400px;width:19px;height:10px;background:#c9c9c9;border-top:1px solid #f2f2f2;border-left:1px solid #f2f2f2"></div>
<div class="a" style="left:911px;top:400px;width:18px;height:10px;background:#c9c9c9;border-top:1px solid #f2f2f2;border-left:1px solid #f2f2f2"></div>
<div class="a" style="left:931px;top:400px;width:18px;height:10px;background:#c9c9c9;border-top:1px solid #f2f2f2;border-left:1px solid #f2f2f2"></div>
<div class="a" style="left:951px;top:400px;width:19px;height:10px;background:#c9c9c9;border-top:1px solid #f2f2f2;border-left:1px solid #f2f2f2"></div>
<div class="t" style="left:628.35px;top:414px;font-size:10px;color:#111;transform:scaleX(0.8600);transform-origin:0 0;">E19</div>
<div class="a" style="left:646px;top:412px;width:19px;height:10px;background:#00f000;border-top:1px solid #5cff5c;border-left:1px solid #5cff5c"></div>
<div class="t" style="left:652.86px;top:414px;font-size:10px;color:#111;transform:scaleX(0.9500);transform-origin:0 0;">7</div>
<div class="a" style="left:667px;top:412px;width:18px;height:10px;background:#00f000;border-top:1px solid #5cff5c;border-left:1px solid #5cff5c"></div>
<div class="t" style="left:668.08px;top:414px;font-size:10px;color:#111;transform:scaleX(0.9500);transform-origin:0 0;">204</div>
<div class="a" style="left:687px;top:412px;width:18px;height:10px;background:#c9c9c9;border-top:1px solid #f2f2f2;border-left:1px solid #f2f2f2"></div>
<div class="a" style="left:707px;top:412px;width:19px;height:10px;background:#c9c9c9;border-top:1px solid #f2f2f2;border-left:1px solid #f2f2f2"></div>
<div class="a" style="left:728px;top:412px;width:18px;height:10px;background:#c9c9c9;border-top:1px solid #f2f2f2;border-left:1px solid #f2f2f2"></div>
<div class="a" style="left:748px;top:412px;width:18px;height:10px;background:#c9c9c9;border-top:1px solid #f2f2f2;border-left:1px solid #f2f2f2"></div>
<div class="a" style="left:768px;top:412px;width:19px;height:10px;background:#c9c9c9;border-top:1px solid #f2f2f2;border-left:1px solid #f2f2f2"></div>
<div class="a" style="left:789px;top:412px;width:18px;height:10px;background:#c9c9c9;border-top:1px solid #f2f2f2;border-left:1px solid #f2f2f2"></div>
<div class="a" style="left:809px;top:412px;width:18px;height:10px;background:#c9c9c9;border-top:1px solid #f2f2f2;border-left:1px solid #f2f2f2"></div>
<div class="a" style="left:829px;top:412px;width:19px;height:10px;background:#c9c9c9;border-top:1px solid #f2f2f2;border-left:1px solid #f2f2f2"></div>
<div class="a" style="left:850px;top:412px;width:18px;height:10px;background:#c9c9c9;border-top:1px solid #f2f2f2;border-left:1px solid #f2f2f2"></div>
<div class="a" style="left:870px;top:412px;width:18px;height:10px;background:#c9c9c9;border-top:1px solid #f2f2f2;border-left:1px solid #f2f2f2"></div>
<div class="a" style="left:890px;top:412px;width:19px;height:10px;background:#c9c9c9;border-top:1px solid #f2f2f2;border-left:1px solid #f2f2f2"></div>
<div class="a" style="left:911px;top:412px;width:18px;height:10px;background:#c9c9c9;border-top:1px solid #f2f2f2;border-left:1px solid #f2f2f2"></div>
<div class="a" style="left:931px;top:412px;width:18px;height:10px;background:#c9c9c9;border-top:1px solid #f2f2f2;border-left:1px solid #f2f2f2"></div>
<div class="a" style="left:951px;top:412px;width:19px;height:10px;background:#c9c9c9;border-top:1px solid #f2f2f2;border-left:1px solid #f2f2f2"></div>
<div class="t" style="left:628.35px;top:426px;font-size:10px;color:#111;transform:scaleX(0.8600);transform-origin:0 0;">E20</div>
<div class="a" style="left:646px;top:424px;width:19px;height:10px;background:#c9c9c9;border-top:1px solid #f2f2f2;border-left:1px solid #f2f2f2"></div>
<div class="a" style="left:667px;top:424px;width:18px;height:10px;background:#c9c9c9;border-top:1px solid #f2f2f2;border-left:1px solid #f2f2f2"></div>
<div class="a" style="left:687px;top:424px;width:18px;height:10px;background:#c9c9c9;border-top:1px solid #f2f2f2;border-left:1px solid #f2f2f2"></div>
<div class="a" style="left:707px;top:424px;width:19px;height:10px;background:#c9c9c9;border-top:1px solid #f2f2f2;border-left:1px solid #f2f2f2"></div>
<div class="a" style="left:728px;top:424px;width:18px;height:10px;background:#c9c9c9;border-top:1px solid #f2f2f2;border-left:1px solid #f2f2f2"></div>
<div class="a" style="left:748px;top:424px;width:18px;height:10px;background:#c9c9c9;border-top:1px solid #f2f2f2;border-left:1px solid #f2f2f2"></div>
<div class="a" style="left:768px;top:424px;width:19px;height:10px;background:#c9c9c9;border-top:1px solid #f2f2f2;border-left:1px solid #f2f2f2"></div>
<div class="a" style="left:789px;top:424px;width:18px;height:10px;background:#c9c9c9;border-top:1px solid #f2f2f2;border-left:1px solid #f2f2f2"></div>
<div class="a" style="left:809px;top:424px;width:18px;height:10px;background:#c9c9c9;border-top:1px solid #f2f2f2;border-left:1px solid #f2f2f2"></div>
<div class="a" style="left:829px;top:424px;width:19px;height:10px;background:#c9c9c9;border-top:1px solid #f2f2f2;border-left:1px solid #f2f2f2"></div>
<div class="a" style="left:850px;top:424px;width:18px;height:10px;background:#c9c9c9;border-top:1px solid #f2f2f2;border-left:1px solid #f2f2f2"></div>
<div class="a" style="left:870px;top:424px;width:18px;height:10px;background:#c9c9c9;border-top:1px solid #f2f2f2;border-left:1px solid #f2f2f2"></div>
<div class="a" style="left:890px;top:424px;width:19px;height:10px;background:#c9c9c9;border-top:1px solid #f2f2f2;border-left:1px solid #f2f2f2"></div>
<div class="a" style="left:911px;top:424px;width:18px;height:10px;background:#c9c9c9;border-top:1px solid #f2f2f2;border-left:1px solid #f2f2f2"></div>
<div class="a" style="left:931px;top:424px;width:18px;height:10px;background:#c9c9c9;border-top:1px solid #f2f2f2;border-left:1px solid #f2f2f2"></div>
<div class="a" style="left:951px;top:424px;width:19px;height:10px;background:#c9c9c9;border-top:1px solid #f2f2f2;border-left:1px solid #f2f2f2"></div>
<div class="t" style="left:628.35px;top:438px;font-size:10px;color:#111;transform:scaleX(0.8600);transform-origin:0 0;">E21</div>
<div class="a" style="left:646px;top:436px;width:19px;height:10px;background:#00f000;border-top:1px solid #5cff5c;border-left:1px solid #5cff5c"></div>
<div class="t" style="left:650.22px;top:438px;font-size:10px;color:#111;transform:scaleX(0.9500);transform-origin:0 0;">47</div>
<div class="a" style="left:667px;top:436px;width:18px;height:10px;background:#00f000;border-top:1px solid #5cff5c;border-left:1px solid #5cff5c"></div>
<div class="t" style="left:670.72px;top:438px;font-size:10px;color:#111;transform:scaleX(0.9500);transform-origin:0 0;">51</div>
<div class="a" style="left:687px;top:436px;width:18px;height:10px;background:#00f000;border-top:1px solid #5cff5c;border-left:1px solid #5cff5c"></div>
<div class="t" style="left:690.72px;top:438px;font-size:10px;color:#111;transform:scaleX(0.9500);transform-origin:0 0;">55</div>
<div class="a" style="left:707px;top:436px;width:19px;height:10px;background:#c9c9c9;border-top:1px solid #f2f2f2;border-left:1px solid #f2f2f2"></div>
<div class="a" style="left:728px;top:436px;width:18px;height:10px;background:#c9c9c9;border-top:1px solid #f2f2f2;border-left:1px solid #f2f2f2"></div>
<div class="a" style="left:748px;top:436px;width:18px;height:10px;background:#c9c9c9;border-top:1px solid #f2f2f2;border-left:1px solid #f2f2f2"></div>
<div class="a" style="left:768px;top:436px;width:19px;height:10px;background:#c9c9c9;border-top:1px solid #f2f2f2;border-left:1px solid #f2f2f2"></div>
<div class="a" style="left:789px;top:436px;width:18px;height:10px;background:#c9c9c9;border-top:1px solid #f2f2f2;border-left:1px solid #f2f2f2"></div>
<div class="a" style="left:809px;top:436px;width:18px;height:10px;background:#c9c9c9;border-top:1px solid #f2f2f2;border-left:1px solid #f2f2f2"></div>
<div class="a" style="left:829px;top:436px;width:19px;height:10px;background:#c9c9c9;border-top:1px solid #f2f2f2;border-left:1px solid #f2f2f2"></div>
<div class="a" style="left:850px;top:436px;width:18px;height:10px;background:#c9c9c9;border-top:1px solid #f2f2f2;border-left:1px solid #f2f2f2"></div>
<div class="a" style="left:870px;top:436px;width:18px;height:10px;background:#c9c9c9;border-top:1px solid #f2f2f2;border-left:1px solid #f2f2f2"></div>
<div class="a" style="left:890px;top:436px;width:19px;height:10px;background:#c9c9c9;border-top:1px solid #f2f2f2;border-left:1px solid #f2f2f2"></div>
<div class="a" style="left:911px;top:436px;width:18px;height:10px;background:#c9c9c9;border-top:1px solid #f2f2f2;border-left:1px solid #f2f2f2"></div>
<div class="a" style="left:931px;top:436px;width:18px;height:10px;background:#c9c9c9;border-top:1px solid #f2f2f2;border-left:1px solid #f2f2f2"></div>
<div class="a" style="left:951px;top:436px;width:19px;height:10px;background:#c9c9c9;border-top:1px solid #f2f2f2;border-left:1px solid #f2f2f2"></div>
<div class="t" style="left:628.35px;top:450px;font-size:10px;color:#111;transform:scaleX(0.8600);transform-origin:0 0;">E22</div>
<div class="a" style="left:646px;top:448px;width:19px;height:11px;background:#00f000;border-top:1px solid #5cff5c;border-left:1px solid #5cff5c"></div>
<div class="t" style="left:650.22px;top:450px;font-size:10px;color:#111;transform:scaleX(0.9500);transform-origin:0 0;">67</div>
<div class="a" style="left:667px;top:448px;width:18px;height:11px;background:#00f000;border-top:1px solid #5cff5c;border-left:1px solid #5cff5c"></div>
<div class="t" style="left:670.72px;top:450px;font-size:10px;color:#111;transform:scaleX(0.9500);transform-origin:0 0;">69</div>
<div class="a" style="left:687px;top:448px;width:18px;height:11px;background:#c9c9c9;border-top:1px solid #f2f2f2;border-left:1px solid #f2f2f2"></div>
<div class="a" style="left:707px;top:448px;width:19px;height:11px;background:#c9c9c9;border-top:1px solid #f2f2f2;border-left:1px solid #f2f2f2"></div>
<div class="a" style="left:728px;top:448px;width:18px;height:11px;background:#c9c9c9;border-top:1px solid #f2f2f2;border-left:1px solid #f2f2f2"></div>
<div class="a" style="left:748px;top:448px;width:18px;height:11px;background:#c9c9c9;border-top:1px solid #f2f2f2;border-left:1px solid #f2f2f2"></div>
<div class="a" style="left:768px;top:448px;width:19px;height:11px;background:#c9c9c9;border-top:1px solid #f2f2f2;border-left:1px solid #f2f2f2"></div>
<div class="a" style="left:789px;top:448px;width:18px;height:11px;background:#c9c9c9;border-top:1px solid #f2f2f2;border-left:1px solid #f2f2f2"></div>
<div class="a" style="left:809px;top:448px;width:18px;height:11px;background:#c9c9c9;border-top:1px solid #f2f2f2;border-left:1px solid #f2f2f2"></div>
<div class="a" style="left:829px;top:448px;width:19px;height:11px;background:#c9c9c9;border-top:1px solid #f2f2f2;border-left:1px solid #f2f2f2"></div>
<div class="a" style="left:850px;top:448px;width:18px;height:11px;background:#c9c9c9;border-top:1px solid #f2f2f2;border-left:1px solid #f2f2f2"></div>
<div class="a" style="left:870px;top:448px;width:18px;height:11px;background:#c9c9c9;border-top:1px solid #f2f2f2;border-left:1px solid #f2f2f2"></div>
<div class="a" style="left:890px;top:448px;width:19px;height:11px;background:#c9c9c9;border-top:1px solid #f2f2f2;border-left:1px solid #f2f2f2"></div>
<div class="a" style="left:911px;top:448px;width:18px;height:11px;background:#c9c9c9;border-top:1px solid #f2f2f2;border-left:1px solid #f2f2f2"></div>
<div class="a" style="left:931px;top:448px;width:18px;height:11px;background:#c9c9c9;border-top:1px solid #f2f2f2;border-left:1px solid #f2f2f2"></div>
<div class="a" style="left:951px;top:448px;width:19px;height:11px;background:#c9c9c9;border-top:1px solid #f2f2f2;border-left:1px solid #f2f2f2"></div>
<div class="t" style="left:628.35px;top:463px;font-size:10px;color:#111;transform:scaleX(0.8600);transform-origin:0 0;">E23</div>
<div class="a" style="left:646px;top:461px;width:19px;height:10px;background:#00f000;border-top:1px solid #5cff5c;border-left:1px solid #5cff5c"></div>
<div class="t" style="left:650.22px;top:463px;font-size:10px;color:#111;transform:scaleX(0.9500);transform-origin:0 0;">49</div>
<div class="a" style="left:667px;top:461px;width:18px;height:10px;background:#00f000;border-top:1px solid #5cff5c;border-left:1px solid #5cff5c"></div>
<div class="t" style="left:670.72px;top:463px;font-size:10px;color:#111;transform:scaleX(0.9500);transform-origin:0 0;">53</div>
<div class="a" style="left:687px;top:461px;width:18px;height:10px;background:#00f000;border-top:1px solid #5cff5c;border-left:1px solid #5cff5c"></div>
<div class="t" style="left:690.72px;top:463px;font-size:10px;color:#111;transform:scaleX(0.9500);transform-origin:0 0;">71</div>
<div class="a" style="left:707px;top:461px;width:19px;height:10px;background:#00f000;border-top:1px solid #5cff5c;border-left:1px solid #5cff5c"></div>
<div class="t" style="left:711.22px;top:463px;font-size:10px;color:#111;transform:scaleX(0.9500);transform-origin:0 0;">73</div>
<div class="a" style="left:728px;top:461px;width:18px;height:10px;background:#00f000;border-top:1px solid #5cff5c;border-left:1px solid #5cff5c"></div>
<div class="t" style="left:731.72px;top:463px;font-size:10px;color:#111;transform:scaleX(0.9500);transform-origin:0 0;">75</div>
<div class="a" style="left:748px;top:461px;width:18px;height:10px;background:#00f000;border-top:1px solid #5cff5c;border-left:1px solid #5cff5c"></div>
<div class="t" style="left:751.72px;top:463px;font-size:10px;color:#111;transform:scaleX(0.9500);transform-origin:0 0;">77</div>
<div class="a" style="left:768px;top:461px;width:19px;height:10px;background:#c9c9c9;border-top:1px solid #f2f2f2;border-left:1px solid #f2f2f2"></div>
<div class="a" style="left:789px;top:461px;width:18px;height:10px;background:#c9c9c9;border-top:1px solid #f2f2f2;border-left:1px solid #f2f2f2"></div>
<div class="a" style="left:809px;top:461px;width:18px;height:10px;background:#c9c9c9;border-top:1px solid #f2f2f2;border-left:1px solid #f2f2f2"></div>
<div class="a" style="left:829px;top:461px;width:19px;height:10px;background:#c9c9c9;border-top:1px solid #f2f2f2;border-left:1px solid #f2f2f2"></div>
<div class="a" style="left:850px;top:461px;width:18px;height:10px;background:#c9c9c9;border-top:1px solid #f2f2f2;border-left:1px solid #f2f2f2"></div>
<div class="a" style="left:870px;top:461px;width:18px;height:10px;background:#c9c9c9;border-top:1px solid #f2f2f2;border-left:1px solid #f2f2f2"></div>
<div class="a" style="left:890px;top:461px;width:19px;height:10px;background:#c9c9c9;border-top:1px solid #f2f2f2;border-left:1px solid #f2f2f2"></div>
<div class="a" style="left:911px;top:461px;width:18px;height:10px;background:#c9c9c9;border-top:1px solid #f2f2f2;border-left:1px solid #f2f2f2"></div>
<div class="a" style="left:931px;top:461px;width:18px;height:10px;background:#c9c9c9;border-top:1px solid #f2f2f2;border-left:1px solid #f2f2f2"></div>
<div class="a" style="left:951px;top:461px;width:19px;height:10px;background:#c9c9c9;border-top:1px solid #f2f2f2;border-left:1px solid #f2f2f2"></div>
<div class="t" style="left:628.35px;top:475px;font-size:10px;color:#111;transform:scaleX(0.8600);transform-origin:0 0;">E24</div>
<div class="a" style="left:646px;top:473px;width:19px;height:10px;background:#00f000;border-top:1px solid #5cff5c;border-left:1px solid #5cff5c"></div>
<div class="t" style="left:650.22px;top:475px;font-size:10px;color:#111;transform:scaleX(0.9500);transform-origin:0 0;">61</div>
<div class="a" style="left:667px;top:473px;width:18px;height:10px;background:#c9c9c9;border-top:1px solid #f2f2f2;border-left:1px solid #f2f2f2"></div>
<div class="a" style="left:687px;top:473px;width:18px;height:10px;background:#c9c9c9;border-top:1px solid #f2f2f2;border-left:1px solid #f2f2f2"></div>
<div class="a" style="left:707px;top:473px;width:19px;height:10px;background:#c9c9c9;border-top:1px solid #f2f2f2;border-left:1px solid #f2f2f2"></div>
<div class="a" style="left:728px;top:473px;width:18px;height:10px;background:#c9c9c9;border-top:1px solid #f2f2f2;border-left:1px solid #f2f2f2"></div>
<div class="a" style="left:748px;top:473px;width:18px;height:10px;background:#c9c9c9;border-top:1px solid #f2f2f2;border-left:1px solid #f2f2f2"></div>
<div class="a" style="left:768px;top:473px;width:19px;height:10px;background:#c9c9c9;border-top:1px solid #f2f2f2;border-left:1px solid #f2f2f2"></div>
<div class="a" style="left:789px;top:473px;width:18px;height:10px;background:#c9c9c9;border-top:1px solid #f2f2f2;border-left:1px solid #f2f2f2"></div>
<div class="a" style="left:809px;top:473px;width:18px;height:10px;background:#c9c9c9;border-top:1px solid #f2f2f2;border-left:1px solid #f2f2f2"></div>
<div class="a" style="left:829px;top:473px;width:19px;height:10px;background:#c9c9c9;border-top:1px solid #f2f2f2;border-left:1px solid #f2f2f2"></div>
<div class="a" style="left:850px;top:473px;width:18px;height:10px;background:#c9c9c9;border-top:1px solid #f2f2f2;border-left:1px solid #f2f2f2"></div>
<div class="a" style="left:870px;top:473px;width:18px;height:10px;background:#c9c9c9;border-top:1px solid #f2f2f2;border-left:1px solid #f2f2f2"></div>
<div class="a" style="left:890px;top:473px;width:19px;height:10px;background:#c9c9c9;border-top:1px solid #f2f2f2;border-left:1px solid #f2f2f2"></div>
<div class="a" style="left:911px;top:473px;width:18px;height:10px;background:#c9c9c9;border-top:1px solid #f2f2f2;border-left:1px solid #f2f2f2"></div>
<div class="a" style="left:931px;top:473px;width:18px;height:10px;background:#c9c9c9;border-top:1px solid #f2f2f2;border-left:1px solid #f2f2f2"></div>
<div class="a" style="left:951px;top:473px;width:19px;height:10px;background:#c9c9c9;border-top:1px solid #f2f2f2;border-left:1px solid #f2f2f2"></div>
<div class="t" style="left:628.35px;top:487px;font-size:10px;color:#111;transform:scaleX(0.8600);transform-origin:0 0;">E25</div>
<div class="a" style="left:646px;top:485px;width:19px;height:10px;background:#00f000;border-top:1px solid #5cff5c;border-left:1px solid #5cff5c"></div>
<div class="t" style="left:650.22px;top:487px;font-size:10px;color:#111;transform:scaleX(0.9500);transform-origin:0 0;">43</div>
<div class="a" style="left:667px;top:485px;width:18px;height:10px;background:#00f000;border-top:1px solid #5cff5c;border-left:1px solid #5cff5c"></div>
<div class="t" style="left:670.72px;top:487px;font-size:10px;color:#111;transform:scaleX(0.9500);transform-origin:0 0;">63</div>
<div class="a" style="left:687px;top:485px;width:18px;height:10px;background:#c9c9c9;border-top:1px solid #f2f2f2;border-left:1px solid #f2f2f2"></div>
<div class="a" style="left:707px;top:485px;width:19px;height:10px;background:#c9c9c9;border-top:1px solid #f2f2f2;border-left:1px solid #f2f2f2"></div>
<div class="a" style="left:728px;top:485px;width:18px;height:10px;background:#c9c9c9;border-top:1px solid #f2f2f2;border-left:1px solid #f2f2f2"></div>
<div class="a" style="left:748px;top:485px;width:18px;height:10px;background:#c9c9c9;border-top:1px solid #f2f2f2;border-left:1px solid #f2f2f2"></div>
<div class="a" style="left:768px;top:485px;width:19px;height:10px;background:#c9c9c9;border-top:1px solid #f2f2f2;border-left:1px solid #f2f2f2"></div>
<div class="a" style="left:789px;top:485px;width:18px;height:10px;background:#c9c9c9;border-top:1px solid #f2f2f2;border-left:1px solid #f2f2f2"></div>
<div class="a" style="left:809px;top:485px;width:18px;height:10px;background:#c9c9c9;border-top:1px solid #f2f2f2;border-left:1px solid #f2f2f2"></div>
<div class="a" style="left:829px;top:485px;width:19px;height:10px;background:#c9c9c9;border-top:1px solid #f2f2f2;border-left:1px solid #f2f2f2"></div>
<div class="a" style="left:850px;top:485px;width:18px;height:10px;background:#c9c9c9;border-top:1px solid #f2f2f2;border-left:1px solid #f2f2f2"></div>
<div class="a" style="left:870px;top:485px;width:18px;height:10px;background:#c9c9c9;border-top:1px solid #f2f2f2;border-left:1px solid #f2f2f2"></div>
<div class="a" style="left:890px;top:485px;width:19px;height:10px;background:#c9c9c9;border-top:1px solid #f2f2f2;border-left:1px solid #f2f2f2"></div>
<div class="a" style="left:911px;top:485px;width:18px;height:10px;background:#c9c9c9;border-top:1px solid #f2f2f2;border-left:1px solid #f2f2f2"></div>
<div class="a" style="left:931px;top:485px;width:18px;height:10px;background:#c9c9c9;border-top:1px solid #f2f2f2;border-left:1px solid #f2f2f2"></div>
<div class="a" style="left:951px;top:485px;width:19px;height:10px;background:#c9c9c9;border-top:1px solid #f2f2f2;border-left:1px solid #f2f2f2"></div>
<div class="t" style="left:628.35px;top:499px;font-size:10px;color:#111;transform:scaleX(0.8600);transform-origin:0 0;">E26</div>
<div class="a" style="left:646px;top:497px;width:19px;height:10px;background:#00f000;border-top:1px solid #5cff5c;border-left:1px solid #5cff5c"></div>
<div class="t" style="left:650.22px;top:499px;font-size:10px;color:#111;transform:scaleX(0.9500);transform-origin:0 0;">45</div>
<div class="a" style="left:667px;top:497px;width:18px;height:10px;background:#c9c9c9;border-top:1px solid #f2f2f2;border-left:1px solid #f2f2f2"></div>
<div class="a" style="left:687px;top:497px;width:18px;height:10px;background:#c9c9c9;border-top:1px solid #f2f2f2;border-left:1px solid #f2f2f2"></div>
<div class="a" style="left:707px;top:497px;width:19px;height:10px;background:#c9c9c9;border-top:1px solid #f2f2f2;border-left:1px solid #f2f2f2"></div>
<div class="a" style="left:728px;top:497px;width:18px;height:10px;background:#c9c9c9;border-top:1px solid #f2f2f2;border-left:1px solid #f2f2f2"></div>
<div class="a" style="left:748px;top:497px;width:18px;height:10px;background:#c9c9c9;border-top:1px solid #f2f2f2;border-left:1px solid #f2f2f2"></div>
<div class="a" style="left:768px;top:497px;width:19px;height:10px;background:#c9c9c9;border-top:1px solid #f2f2f2;border-left:1px solid #f2f2f2"></div>
<div class="a" style="left:789px;top:497px;width:18px;height:10px;background:#c9c9c9;border-top:1px solid #f2f2f2;border-left:1px solid #f2f2f2"></div>
<div class="a" style="left:809px;top:497px;width:18px;height:10px;background:#c9c9c9;border-top:1px solid #f2f2f2;border-left:1px solid #f2f2f2"></div>
<div class="a" style="left:829px;top:497px;width:19px;height:10px;background:#c9c9c9;border-top:1px solid #f2f2f2;border-left:1px solid #f2f2f2"></div>
<div class="a" style="left:850px;top:497px;width:18px;height:10px;background:#c9c9c9;border-top:1px solid #f2f2f2;border-left:1px solid #f2f2f2"></div>
<div class="a" style="left:870px;top:497px;width:18px;height:10px;background:#c9c9c9;border-top:1px solid #f2f2f2;border-left:1px solid #f2f2f2"></div>
<div class="a" style="left:890px;top:497px;width:19px;height:10px;background:#c9c9c9;border-top:1px solid #f2f2f2;border-left:1px solid #f2f2f2"></div>
<div class="a" style="left:911px;top:497px;width:18px;height:10px;background:#c9c9c9;border-top:1px solid #f2f2f2;border-left:1px solid #f2f2f2"></div>
<div class="a" style="left:931px;top:497px;width:18px;height:10px;background:#c9c9c9;border-top:1px solid #f2f2f2;border-left:1px solid #f2f2f2"></div>
<div class="a" style="left:951px;top:497px;width:19px;height:10px;background:#c9c9c9;border-top:1px solid #f2f2f2;border-left:1px solid #f2f2f2"></div>
<div class="t" style="left:628.35px;top:511px;font-size:10px;color:#111;transform:scaleX(0.8600);transform-origin:0 0;">E27</div>
<div class="a" style="left:646px;top:509px;width:19px;height:11px;background:#00f000;border-top:1px solid #5cff5c;border-left:1px solid #5cff5c"></div>
<div class="t" style="left:650.22px;top:511px;font-size:10px;color:#111;transform:scaleX(0.9500);transform-origin:0 0;">79</div>
<div class="a" style="left:667px;top:509px;width:18px;height:11px;background:#c9c9c9;border-top:1px solid #f2f2f2;border-left:1px solid #f2f2f2"></div>
<div class="a" style="left:687px;top:509px;width:18px;height:11px;background:#c9c9c9;border-top:1px solid #f2f2f2;border-left:1px solid #f2f2f2"></div>
<div class="a" style="left:707px;top:509px;width:19px;height:11px;background:#c9c9c9;border-top:1px solid #f2f2f2;border-left:1px solid #f2f2f2"></div>
<div class="a" style="left:728px;top:509px;width:18px;height:11px;background:#c9c9c9;border-top:1px solid #f2f2f2;border-left:1px solid #f2f2f2"></div>
<div class="a" style="left:748px;top:509px;width:18px;height:11px;background:#c9c9c9;border-top:1px solid #f2f2f2;border-left:1px solid #f2f2f2"></div>
<div class="a" style="left:768px;top:509px;width:19px;height:11px;background:#c9c9c9;border-top:1px solid #f2f2f2;border-left:1px solid #f2f2f2"></div>
<div class="a" style="left:789px;top:509px;width:18px;height:11px;background:#c9c9c9;border-top:1px solid #f2f2f2;border-left:1px solid #f2f2f2"></div>
<div class="a" style="left:809px;top:509px;width:18px;height:11px;background:#c9c9c9;border-top:1px solid #f2f2f2;border-left:1px solid #f2f2f2"></div>
<div class="a" style="left:829px;top:509px;width:19px;height:11px;background:#c9c9c9;border-top:1px solid #f2f2f2;border-left:1px solid #f2f2f2"></div>
<div class="a" style="left:850px;top:509px;width:18px;height:11px;background:#c9c9c9;border-top:1px solid #f2f2f2;border-left:1px solid #f2f2f2"></div>
<div class="a" style="left:870px;top:509px;width:18px;height:11px;background:#c9c9c9;border-top:1px solid #f2f2f2;border-left:1px solid #f2f2f2"></div>
<div class="a" style="left:890px;top:509px;width:19px;height:11px;background:#c9c9c9;border-top:1px solid #f2f2f2;border-left:1px solid #f2f2f2"></div>
<div class="a" style="left:911px;top:509px;width:18px;height:11px;background:#c9c9c9;border-top:1px solid #f2f2f2;border-left:1px solid #f2f2f2"></div>
<div class="a" style="left:931px;top:509px;width:18px;height:11px;background:#c9c9c9;border-top:1px solid #f2f2f2;border-left:1px solid #f2f2f2"></div>
<div class="a" style="left:951px;top:509px;width:19px;height:11px;background:#c9c9c9;border-top:1px solid #f2f2f2;border-left:1px solid #f2f2f2"></div>
<div class="t" style="left:628.35px;top:524px;font-size:10px;color:#111;transform:scaleX(0.8600);transform-origin:0 0;">E28</div>
<div class="a" style="left:646px;top:522px;width:19px;height:10px;background:#c9c9c9;border-top:1px solid #f2f2f2;border-left:1px solid #f2f2f2"></div>
<div class="a" style="left:667px;top:522px;width:18px;height:10px;background:#c9c9c9;border-top:1px solid #f2f2f2;border-left:1px solid #f2f2f2"></div>
<div class="a" style="left:687px;top:522px;width:18px;height:10px;background:#c9c9c9;border-top:1px solid #f2f2f2;border-left:1px solid #f2f2f2"></div>
<div class="a" style="left:707px;top:522px;width:19px;height:10px;background:#c9c9c9;border-top:1px solid #f2f2f2;border-left:1px solid #f2f2f2"></div>
<div class="a" style="left:728px;top:522px;width:18px;height:10px;background:#c9c9c9;border-top:1px solid #f2f2f2;border-left:1px solid #f2f2f2"></div>
<div class="a" style="left:748px;top:522px;width:18px;height:10px;background:#c9c9c9;border-top:1px solid #f2f2f2;border-left:1px solid #f2f2f2"></div>
<div class="a" style="left:768px;top:522px;width:19px;height:10px;background:#c9c9c9;border-top:1px solid #f2f2f2;border-left:1px solid #f2f2f2"></div>
<div class="a" style="left:789px;top:522px;width:18px;height:10px;background:#c9c9c9;border-top:1px solid #f2f2f2;border-left:1px solid #f2f2f2"></div>
<div class="a" style="left:809px;top:522px;width:18px;height:10px;background:#c9c9c9;border-top:1px solid #f2f2f2;border-left:1px solid #f2f2f2"></div>
<div class="a" style="left:829px;top:522px;width:19px;height:10px;background:#c9c9c9;border-top:1px solid #f2f2f2;border-left:1px solid #f2f2f2"></div>
<div class="a" style="left:850px;top:522px;width:18px;height:10px;background:#c9c9c9;border-top:1px solid #f2f2f2;border-left:1px solid #f2f2f2"></div>
<div class="a" style="left:870px;top:522px;width:18px;height:10px;background:#c9c9c9;border-top:1px solid #f2f2f2;border-left:1px solid #f2f2f2"></div>
<div class="a" style="left:890px;top:522px;width:19px;height:10px;background:#c9c9c9;border-top:1px solid #f2f2f2;border-left:1px solid #f2f2f2"></div>
<div class="a" style="left:911px;top:522px;width:18px;height:10px;background:#c9c9c9;border-top:1px solid #f2f2f2;border-left:1px solid #f2f2f2"></div>
<div class="a" style="left:931px;top:522px;width:18px;height:10px;background:#c9c9c9;border-top:1px solid #f2f2f2;border-left:1px solid #f2f2f2"></div>
<div class="a" style="left:951px;top:522px;width:19px;height:10px;background:#c9c9c9;border-top:1px solid #f2f2f2;border-left:1px solid #f2f2f2"></div>
<div class="t" style="left:628.35px;top:536px;font-size:10px;color:#111;transform:scaleX(0.8600);transform-origin:0 0;">E29</div>
<div class="a" style="left:646px;top:534px;width:19px;height:10px;background:#c9c9c9;border-top:1px solid #f2f2f2;border-left:1px solid #f2f2f2"></div>
<div class="a" style="left:667px;top:534px;width:18px;height:10px;background:#c9c9c9;border-top:1px solid #f2f2f2;border-left:1px solid #f2f2f2"></div>
<div class="a" style="left:687px;top:534px;width:18px;height:10px;background:#c9c9c9;border-top:1px solid #f2f2f2;border-left:1px solid #f2f2f2"></div>
<div class="a" style="left:707px;top:534px;width:19px;height:10px;background:#c9c9c9;border-top:1px solid #f2f2f2;border-left:1px solid #f2f2f2"></div>
<div class="a" style="left:728px;top:534px;width:18px;height:10px;background:#c9c9c9;border-top:1px solid #f2f2f2;border-left:1px solid #f2f2f2"></div>
<div class="a" style="left:748px;top:534px;width:18px;height:10px;background:#c9c9c9;border-top:1px solid #f2f2f2;border-left:1px solid #f2f2f2"></div>
<div class="a" style="left:768px;top:534px;width:19px;height:10px;background:#c9c9c9;border-top:1px solid #f2f2f2;border-left:1px solid #f2f2f2"></div>
<div class="a" style="left:789px;top:534px;width:18px;height:10px;background:#c9c9c9;border-top:1px solid #f2f2f2;border-left:1px solid #f2f2f2"></div>
<div class="a" style="left:809px;top:534px;width:18px;height:10px;background:#c9c9c9;border-top:1px solid #f2f2f2;border-left:1px solid #f2f2f2"></div>
<div class="a" style="left:829px;top:534px;width:19px;height:10px;background:#c9c9c9;border-top:1px solid #f2f2f2;border-left:1px solid #f2f2f2"></div>
<div class="a" style="left:850px;top:534px;width:18px;height:10px;background:#c9c9c9;border-top:1px solid #f2f2f2;border-left:1px solid #f2f2f2"></div>
<div class="a" style="left:870px;top:534px;width:18px;height:10px;background:#c9c9c9;border-top:1px solid #f2f2f2;border-left:1px solid #f2f2f2"></div>
<div class="a" style="left:890px;top:534px;width:19px;height:10px;background:#c9c9c9;border-top:1px solid #f2f2f2;border-left:1px solid #f2f2f2"></div>
<div class="a" style="left:911px;top:534px;width:18px;height:10px;background:#c9c9c9;border-top:1px solid #f2f2f2;border-left:1px solid #f2f2f2"></div>
<div class="a" style="left:931px;top:534px;width:18px;height:10px;background:#c9c9c9;border-top:1px solid #f2f2f2;border-left:1px solid #f2f2f2"></div>
<div class="a" style="left:951px;top:534px;width:19px;height:10px;background:#c9c9c9;border-top:1px solid #f2f2f2;border-left:1px solid #f2f2f2"></div>
<div class="t" style="left:628.35px;top:548px;font-size:10px;color:#111;transform:scaleX(0.8600);transform-origin:0 0;">E30</div>
<div class="a" style="left:646px;top:546px;width:19px;height:10px;background:#c9c9c9;border-top:1px solid #f2f2f2;border-left:1px solid #f2f2f2"></div>
<div class="a" style="left:667px;top:546px;width:18px;height:10px;background:#c9c9c9;border-top:1px solid #f2f2f2;border-left:1px solid #f2f2f2"></div>
<div class="a" style="left:687px;top:546px;width:18px;height:10px;background:#c9c9c9;border-top:1px solid #f2f2f2;border-left:1px solid #f2f2f2"></div>
<div class="a" style="left:707px;top:546px;width:19px;height:10px;background:#c9c9c9;border-top:1px solid #f2f2f2;border-left:1px solid #f2f2f2"></div>
<div class="a" style="left:728px;top:546px;width:18px;height:10px;background:#c9c9c9;border-top:1px solid #f2f2f2;border-left:1px solid #f2f2f2"></div>
<div class="a" style="left:748px;top:546px;width:18px;height:10px;background:#c9c9c9;border-top:1px solid #f2f2f2;border-left:1px solid #f2f2f2"></div>
<div class="a" style="left:768px;top:546px;width:19px;height:10px;background:#c9c9c9;border-top:1px solid #f2f2f2;border-left:1px solid #f2f2f2"></div>
<div class="a" style="left:789px;top:546px;width:18px;height:10px;background:#c9c9c9;border-top:1px solid #f2f2f2;border-left:1px solid #f2f2f2"></div>
<div class="a" style="left:809px;top:546px;width:18px;height:10px;background:#c9c9c9;border-top:1px solid #f2f2f2;border-left:1px solid #f2f2f2"></div>
<div class="a" style="left:829px;top:546px;width:19px;height:10px;background:#c9c9c9;border-top:1px solid #f2f2f2;border-left:1px solid #f2f2f2"></div>
<div class="a" style="left:850px;top:546px;width:18px;height:10px;background:#c9c9c9;border-top:1px solid #f2f2f2;border-left:1px solid #f2f2f2"></div>
<div class="a" style="left:870px;top:546px;width:18px;height:10px;background:#c9c9c9;border-top:1px solid #f2f2f2;border-left:1px solid #f2f2f2"></div>
<div class="a" style="left:890px;top:546px;width:19px;height:10px;background:#c9c9c9;border-top:1px solid #f2f2f2;border-left:1px solid #f2f2f2"></div>
<div class="a" style="left:911px;top:546px;width:18px;height:10px;background:#c9c9c9;border-top:1px solid #f2f2f2;border-left:1px solid #f2f2f2"></div>
<div class="a" style="left:931px;top:546px;width:18px;height:10px;background:#c9c9c9;border-top:1px solid #f2f2f2;border-left:1px solid #f2f2f2"></div>
<div class="a" style="left:951px;top:546px;width:19px;height:10px;background:#c9c9c9;border-top:1px solid #f2f2f2;border-left:1px solid #f2f2f2"></div>
<div class="t" style="left:628.35px;top:560px;font-size:10px;color:#111;transform:scaleX(0.8600);transform-origin:0 0;">E31</div>
<div class="a" style="left:646px;top:558px;width:19px;height:10px;background:#00f000;border-top:1px solid #5cff5c;border-left:1px solid #5cff5c"></div>
<div class="t" style="left:647.58px;top:560px;font-size:10px;color:#111;transform:scaleX(0.9500);transform-origin:0 0;">108</div>
<div class="a" style="left:667px;top:558px;width:18px;height:10px;background:#c9c9c9;border-top:1px solid #f2f2f2;border-left:1px solid #f2f2f2"></div>
<div class="a" style="left:687px;top:558px;width:18px;height:10px;background:#c9c9c9;border-top:1px solid #f2f2f2;border-left:1px solid #f2f2f2"></div>
<div class="a" style="left:707px;top:558px;width:19px;height:10px;background:#c9c9c9;border-top:1px solid #f2f2f2;border-left:1px solid #f2f2f2"></div>
<div class="a" style="left:728px;top:558px;width:18px;height:10px;background:#c9c9c9;border-top:1px solid #f2f2f2;border-left:1px solid #f2f2f2"></div>
<div class="a" style="left:748px;top:558px;width:18px;height:10px;background:#c9c9c9;border-top:1px solid #f2f2f2;border-left:1px solid #f2f2f2"></div>
<div class="a" style="left:768px;top:558px;width:19px;height:10px;background:#c9c9c9;border-top:1px solid #f2f2f2;border-left:1px solid #f2f2f2"></div>
<div class="a" style="left:789px;top:558px;width:18px;height:10px;background:#c9c9c9;border-top:1px solid #f2f2f2;border-left:1px solid #f2f2f2"></div>
<div class="a" style="left:809px;top:558px;width:18px;height:10px;background:#c9c9c9;border-top:1px solid #f2f2f2;border-left:1px solid #f2f2f2"></div>
<div class="a" style="left:829px;top:558px;width:19px;height:10px;background:#c9c9c9;border-top:1px solid #f2f2f2;border-left:1px solid #f2f2f2"></div>
<div class="a" style="left:850px;top:558px;width:18px;height:10px;background:#c9c9c9;border-top:1px solid #f2f2f2;border-left:1px solid #f2f2f2"></div>
<div class="a" style="left:870px;top:558px;width:18px;height:10px;background:#c9c9c9;border-top:1px solid #f2f2f2;border-left:1px solid #f2f2f2"></div>
<div class="a" style="left:890px;top:558px;width:19px;height:10px;background:#c9c9c9;border-top:1px solid #f2f2f2;border-left:1px solid #f2f2f2"></div>
<div class="a" style="left:911px;top:558px;width:18px;height:10px;background:#c9c9c9;border-top:1px solid #f2f2f2;border-left:1px solid #f2f2f2"></div>
<div class="a" style="left:931px;top:558px;width:18px;height:10px;background:#c9c9c9;border-top:1px solid #f2f2f2;border-left:1px solid #f2f2f2"></div>
<div class="a" style="left:951px;top:558px;width:19px;height:10px;background:#c9c9c9;border-top:1px solid #f2f2f2;border-left:1px solid #f2f2f2"></div>
<div class="t" style="left:628.35px;top:572px;font-size:10px;color:#111;transform:scaleX(0.8600);transform-origin:0 0;">E32</div>
<div class="a" style="left:646px;top:570px;width:19px;height:10px;background:#00f000;border-top:1px solid #5cff5c;border-left:1px solid #5cff5c"></div>
<div class="t" style="left:647.58px;top:572px;font-size:10px;color:#111;transform:scaleX(0.9500);transform-origin:0 0;">180</div>
<div class="a" style="left:667px;top:570px;width:18px;height:10px;background:#c9c9c9;border-top:1px solid #f2f2f2;border-left:1px solid #f2f2f2"></div>
<div class="a" style="left:687px;top:570px;width:18px;height:10px;background:#c9c9c9;border-top:1px solid #f2f2f2;border-left:1px solid #f2f2f2"></div>
<div class="a" style="left:707px;top:570px;width:19px;height:10px;background:#c9c9c9;border-top:1px solid #f2f2f2;border-left:1px solid #f2f2f2"></div>
<div class="a" style="left:728px;top:570px;width:18px;height:10px;background:#c9c9c9;border-top:1px solid #f2f2f2;border-left:1px solid #f2f2f2"></div>
<div class="a" style="left:748px;top:570px;width:18px;height:10px;background:#c9c9c9;border-top:1px solid #f2f2f2;border-left:1px solid #f2f2f2"></div>
<div class="a" style="left:768px;top:570px;width:19px;height:10px;background:#c9c9c9;border-top:1px solid #f2f2f2;border-left:1px solid #f2f2f2"></div>
<div class="a" style="left:789px;top:570px;width:18px;height:10px;background:#c9c9c9;border-top:1px solid #f2f2f2;border-left:1px solid #f2f2f2"></div>
<div class="a" style="left:809px;top:570px;width:18px;height:10px;background:#c9c9c9;border-top:1px solid #f2f2f2;border-left:1px solid #f2f2f2"></div>
<div class="a" style="left:829px;top:570px;width:19px;height:10px;background:#c9c9c9;border-top:1px solid #f2f2f2;border-left:1px solid #f2f2f2"></div>
<div class="a" style="left:850px;top:570px;width:18px;height:10px;background:#c9c9c9;border-top:1px solid #f2f2f2;border-left:1px solid #f2f2f2"></div>
<div class="a" style="left:870px;top:570px;width:18px;height:10px;background:#c9c9c9;border-top:1px solid #f2f2f2;border-left:1px solid #f2f2f2"></div>
<div class="a" style="left:890px;top:570px;width:19px;height:10px;background:#c9c9c9;border-top:1px solid #f2f2f2;border-left:1px solid #f2f2f2"></div>
<div class="a" style="left:911px;top:570px;width:18px;height:10px;background:#c9c9c9;border-top:1px solid #f2f2f2;border-left:1px solid #f2f2f2"></div>
<div class="a" style="left:931px;top:570px;width:18px;height:10px;background:#c9c9c9;border-top:1px solid #f2f2f2;border-left:1px solid #f2f2f2"></div>
<div class="a" style="left:951px;top:570px;width:19px;height:10px;background:#c9c9c9;border-top:1px solid #f2f2f2;border-left:1px solid #f2f2f2"></div>
<div class="a" style="left:999px;top:40px;width:17px;height:559px;background:#fff;"></div>
<div class="a" style="left:999px;top:40px;width:1px;height:553px;background:#8d8d8d;"></div>
<div class="t" style="left:1012px;top:52px;transform-origin:0 0;transform:rotate(90deg) scaleX(0.87);font-size:10px;color:#1a1a1a">Funktionen: Typ 49</div>
<div class="a" style="left:1002px;top:130px;width:11px;height:1px;background:#8d8d8d;"></div>
<div class="t" style="left:1012px;top:136px;transform-origin:0 0;transform:rotate(90deg) scaleX(0.87);font-size:10px;color:#1a1a1a">Abläufe: Typ 49</div>
<div class="a" style="left:1002px;top:202px;width:11px;height:1px;background:#8d8d8d;"></div>
<div class="a" style="left:7px;top:599px;width:1009px;height:18px;background:#fff;border-top:1px solid #8d8d8d;border-bottom:1px solid #8d8d8d;"></div>
<div class="t" style="left:19.00px;top:604px;font-size:10px;color:#2a2a2a;transform:scaleX(0.8715);transform-origin:0 0;">Systemprotokoll</div>
<div class="a" style="left:84px;top:602px;width:1px;height:11px;background:#8d8d8d;"></div>
<div class="t" style="left:88.00px;top:604px;font-size:10px;color:#2a2a2a;transform:scaleX(0.8812);transform-origin:0 0;">Bearbeiten: Symbole: Typ 49</div>
<div class="a" style="left:205px;top:602px;width:1px;height:11px;background:#8d8d8d;"></div>
<div class="a" style="left:8px;top:617px;width:1008px;height:1px;background:#f6fff6;"></div>
<div class="a" style="left:8px;top:618px;width:1007px;height:16px;background:#00ff00;"></div>
<div class="a" style="left:8px;top:634px;width:1007px;height:1px;background:#2ce02c;"></div>
<div class="t" style="left:8.50px;top:622px;font-size:10px;color:#155515;transform:scaleX(0.9762);transform-origin:0 0;">Angemeldeter Benutzer: Admin (Admin)</div>
<div class="a" style="left:1011px;top:630px;width:2px;height:2px;background:#b8f5b8;"></div>
<div class="a" style="left:1008px;top:630px;width:2px;height:2px;background:#b8f5b8;"></div>
<div class="a" style="left:1005px;top:630px;width:2px;height:2px;background:#b8f5b8;"></div>
<div class="a" style="left:1011px;top:627px;width:2px;height:2px;background:#b8f5b8;"></div>
<div class="a" style="left:1008px;top:627px;width:2px;height:2px;background:#b8f5b8;"></div>
<div class="a" style="left:1011px;top:624px;width:2px;height:2px;background:#b8f5b8;"></div>
</body></html>
